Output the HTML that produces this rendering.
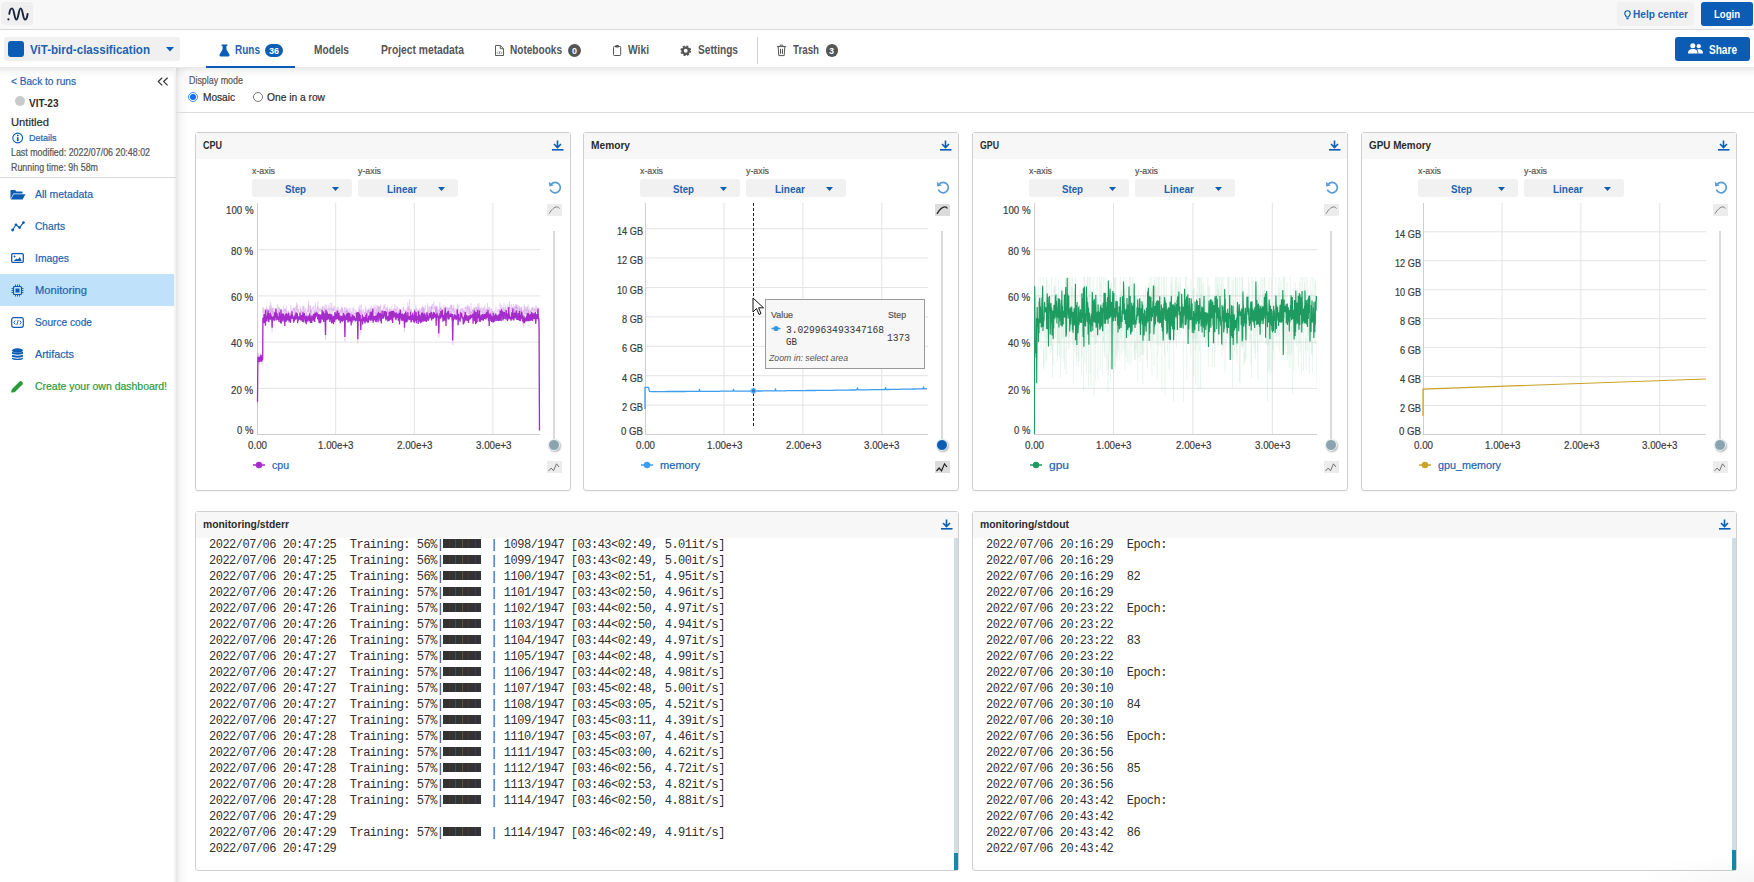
<!DOCTYPE html>
<html><head><meta charset="utf-8"><title>Monitoring</title>
<style>
html,body{margin:0;padding:0;width:1754px;height:882px;overflow:hidden;background:#fff;font-family:"Liberation Sans",sans-serif}
.t{position:absolute;white-space:pre;line-height:1;transform-origin:0 0}
.r{-webkit-text-stroke:0.2px currentColor}
svg{overflow:visible}
</style></head><body>
<div style="position:absolute;left:0px;top:0px;width:1754px;height:29px;background:#f8f8f8"></div>
<div style="position:absolute;left:0px;top:29px;width:1754px;height:1px;background:#d9d9d9"></div>
<div style="position:absolute;left:1px;top:2px;width:32px;height:23px;background:#efefef;border-radius:4px"></div>
<svg style="position:absolute;left:0px;top:0px;" width="34" height="28" viewBox="0 0 34 28"><circle cx="8.4" cy="19.3" r="1.1" fill="#172440"/><path d="M9.3 13.8 C9.8 9.8 10.8 8.4 12.1 8.4 C14.2 8.4 14.3 19.6 16.4 19.6 C18.5 19.6 18.6 8.4 20.7 8.4 C22.8 8.4 22.9 19.6 25 19.6 C26.4 19.6 27.2 17 27.6 14" fill="none" stroke="#172440" stroke-width="1.9" stroke-linecap="round"/></svg>
<div style="position:absolute;left:1617px;top:2px;width:77px;height:24px;background:#f1f1f1;border-radius:3px"></div>
<svg style="position:absolute;left:1623.5px;top:9.5px;" width="7" height="10" viewBox="0 0 7 10"><path d="M3.5 0.7 C1.8 0.7 0.8 2 0.8 3.4 C0.8 4.8 1.9 5.7 2.4 7 L4.6 7 C5.1 5.7 6.2 4.8 6.2 3.4 C6.2 2 5.2 0.7 3.5 0.7 Z" fill="none" stroke="#0b5cb5" stroke-width="1.1"/><rect x="2.3" y="7.9" width="2.4" height="1.3" rx="0.5" fill="#0b5cb5"/></svg>
<div class="t" style="left:1633px;top:8.5px;font-size:11.8px;color:#1c62b0;font-weight:700;transform:scaleX(0.8558);">Help center</div>
<div style="position:absolute;left:1701px;top:2px;width:52px;height:24px;background:#0b5cb5;border-radius:3px"></div>
<div class="t" style="left:1714px;top:8.5px;font-size:11.8px;color:#fff;font-weight:700;transform:scaleX(0.8097);">Login</div>
<div style="position:absolute;left:0px;top:30px;width:1754px;height:37px;background:#fff"></div>
<div style="position:absolute;left:0px;top:67px;width:1754px;height:11px;background:linear-gradient(rgba(0,0,0,0.085),rgba(0,0,0,0.03) 45%,rgba(0,0,0,0))"></div>
<div style="position:absolute;left:4px;top:37px;width:176px;height:24px;background:#f0f0f0;border-radius:3px"></div>
<div style="position:absolute;left:8px;top:41px;width:16px;height:16px;background:#0b5cb5;border-radius:3px"></div>
<div class="t" style="left:30px;top:43px;font-size:13px;color:#1c62b0;font-weight:700;transform:scaleX(0.8899);">ViT-bird-classification</div>
<svg style="position:absolute;left:166px;top:47px;" width="9" height="5" viewBox="0 0 9 5"><path d="M0 0 L8 0 L4 4.5 Z" fill="#0b5cb5"/></svg>
<svg style="position:absolute;left:219px;top:44px;" width="11" height="13" viewBox="0 0 11 13"><path d="M2.6 0.6 L8.4 0.6 L8.4 1.9 L7.4 1.9 L7.4 5.2 L10.4 10.6 C10.9 11.5 10.4 12.4 9.4 12.4 L1.6 12.4 C0.6 12.4 0.1 11.5 0.6 10.6 L3.6 5.2 L3.6 1.9 L2.6 1.9 Z" fill="#0b5cb5"/></svg>
<div class="t" style="left:235px;top:44px;font-size:12px;color:#1c62b0;font-weight:700;transform:scaleX(0.8333);">Runs</div>
<div style="position:absolute;left:265px;top:44px;width:18px;height:13px;background:#0b5cb5;border-radius:7px"></div>
<div class="t" style="left:268.5px;top:46.5px;font-size:9px;color:#fff;font-weight:700;transform:scaleX(0.9989);">36</div>
<div style="position:absolute;left:206px;top:66px;width:89px;height:2px;background:#0b5cb5"></div>
<div class="t" style="left:314px;top:44px;font-size:12px;color:#555;font-weight:700;transform:scaleX(0.8467);">Models</div>
<div class="t" style="left:381px;top:44px;font-size:12px;color:#555;font-weight:700;transform:scaleX(0.8583);">Project metadata</div>
<svg style="position:absolute;left:494px;top:44px;" width="11" height="13" viewBox="0 0 11 13"><path d="M1.5 1.5 L6.3 1.5 L9.5 4.7 L9.5 11.5 L1.5 11.5 Z M6.3 1.5 L6.3 4.7 L9.5 4.7" fill="none" stroke="#555" stroke-width="0.95" stroke-linejoin="round"/><path d="M4.1 7.6 L3.1 8.7 L4.1 9.8 M6.9 7.6 L7.9 8.7 L6.9 9.8 M5.9 7.3 L5.1 10.1" fill="none" stroke="#555" stroke-width="0.7"/></svg>
<div class="t" style="left:510px;top:44px;font-size:12px;color:#555;font-weight:700;transform:scaleX(0.8386);">Notebooks</div>
<div style="position:absolute;left:568px;top:44px;width:13px;height:13px;background:#555;border-radius:7px"></div>
<div class="t" style="left:572px;top:45.5px;font-size:9.5px;color:#fff;font-weight:700;transform:scaleX(0.9463);">0</div>
<svg style="position:absolute;left:612px;top:44px;" width="11" height="13" viewBox="0 0 11 13"><rect x="1.5" y="2.5" width="7.2" height="9" rx="0.8" fill="none" stroke="#555" stroke-width="1"/><rect x="3.4" y="1" width="3.4" height="2.4" rx="0.5" fill="#555"/></svg>
<div class="t" style="left:628px;top:44px;font-size:12px;color:#555;font-weight:700;transform:scaleX(0.8550);">Wiki</div>
<svg style="position:absolute;left:680px;top:45px;" width="12" height="12" viewBox="0 0 12 12"><circle cx="5.75" cy="5.75" r="4.2" fill="none" stroke="#555" stroke-width="2.3" stroke-dasharray="1.9 1.4"/><circle cx="5.75" cy="5.75" r="3.1" fill="none" stroke="#555" stroke-width="2.4"/></svg>
<div class="t" style="left:698px;top:44px;font-size:12px;color:#555;font-weight:700;transform:scaleX(0.8450);">Settings</div>
<div style="position:absolute;left:757px;top:37px;width:1px;height:27px;background:#d0d0d0"></div>
<svg style="position:absolute;left:776px;top:44px;" width="11" height="13" viewBox="0 0 11 13"><path d="M1 2.6 L10 2.6 M4 2.6 L4.3 1.1 L6.7 1.1 L7 2.6 M2.2 2.6 L2.8 11.6 L8.2 11.6 L8.8 2.6 M4.5 4.8 L4.5 9.8 M6.5 4.8 L6.5 9.8" fill="none" stroke="#555" stroke-width="1"/></svg>
<div class="t" style="left:793px;top:44px;font-size:12px;color:#555;font-weight:700;transform:scaleX(0.8121);">Trash</div>
<div style="position:absolute;left:825.5px;top:44px;width:12.5px;height:13px;background:#555;border-radius:7px"></div>
<div class="t" style="left:829px;top:45.5px;font-size:9.5px;color:#fff;font-weight:700;transform:scaleX(0.9463);">3</div>
<div style="position:absolute;left:1675px;top:37px;width:75px;height:24px;background:#0b5cb5;border-radius:3px"></div>
<svg style="position:absolute;left:1688px;top:43px;" width="15" height="11" viewBox="0 0 15 11"><circle cx="4.8" cy="2.8" r="2.5" fill="#fff"/><circle cx="10.8" cy="3.2" r="2.1" fill="#fff"/><path d="M0 10.5 C0 7 2 6 4.8 6 C7.6 6 9.6 7 9.6 10.5 Z" fill="#fff"/><path d="M10.3 10.5 C10.3 8.5 9.8 7.3 9 6.6 C9.5 6.3 10.2 6.2 10.8 6.2 C13.3 6.2 15 7.2 15 10.5 Z" fill="#fff"/></svg>
<div class="t" style="left:1709px;top:44px;font-size:12.5px;color:#fff;font-weight:700;transform:scaleX(0.8059);">Share</div>
<div style="position:absolute;left:174px;top:68px;width:2px;height:814px;background:#f3f3f3"></div>
<div style="position:absolute;left:176px;top:68px;width:12px;height:814px;background:linear-gradient(90deg,rgba(0,0,0,0.10),rgba(0,0,0,0.035) 35%,rgba(0,0,0,0))"></div>
<div class="t r" style="left:11px;top:76px;font-size:11px;color:#1c62b0;transform:scaleX(0.9204);">&lt; Back to runs</div>
<svg style="position:absolute;left:157px;top:77px;" width="12" height="10" viewBox="0 0 12 10"><path d="M5.2 0.8 L1.3 4.6 L5.2 8.4 M10.6 0.8 L6.7 4.6 L10.6 8.4" fill="none" stroke="#333" stroke-width="1.25"/></svg>
<div style="position:absolute;left:15px;top:96px;width:10px;height:10px;border-radius:5px;background:#c9c9c9"></div>
<div class="t" style="left:28.5px;top:98px;font-size:11.5px;color:#2b2b2b;font-weight:700;transform:scaleX(0.8708);">VIT-23</div>
<div class="t r" style="left:11px;top:117px;font-size:11px;color:#2b2b2b;transform:scaleX(1.0188);">Untitled</div>
<svg style="position:absolute;left:12px;top:132px;" width="12" height="12" viewBox="0 0 12 12"><circle cx="5.7" cy="6" r="4.9" fill="none" stroke="#0b5cb5" stroke-width="1.1"/><rect x="4.9" y="5.2" width="1.7" height="3.9" fill="#0b5cb5"/><rect x="4.9" y="2.7" width="1.7" height="1.5" fill="#0b5cb5"/></svg>
<div class="t r" style="left:28.5px;top:133px;font-size:9.6px;color:#1c62b0;transform:scaleX(0.9371);">Details</div>
<div class="t r" style="left:11px;top:148px;font-size:10px;color:#555;transform:scaleX(0.8865);">Last modified: 2022/07/06 20:48:02</div>
<div class="t r" style="left:11px;top:163px;font-size:10px;color:#555;transform:scaleX(0.8893);">Running time: 9h 58m</div>
<div style="position:absolute;left:0px;top:177px;width:176px;height:1px;background:#d9d9d9"></div>
<div style="position:absolute;left:0px;top:274px;width:174px;height:32px;background:#c0e1fa"></div>
<div class="t r" style="left:35px;top:189px;font-size:11px;color:#1c62b0;transform:scaleX(0.9485);">All metadata</div>
<div class="t r" style="left:35px;top:221px;font-size:11px;color:#1c62b0;transform:scaleX(0.9259);">Charts</div>
<div class="t r" style="left:35px;top:253px;font-size:11px;color:#1c62b0;transform:scaleX(0.9425);">Images</div>
<div class="t r" style="left:35px;top:285px;font-size:11px;color:#1c62b0;transform:scaleX(1.0125);">Monitoring</div>
<div class="t r" style="left:35px;top:317px;font-size:11px;color:#1c62b0;transform:scaleX(0.9229);">Source code</div>
<div class="t r" style="left:35px;top:349px;font-size:11px;color:#1c62b0;transform:scaleX(0.9816);">Artifacts</div>
<div class="t r" style="left:35px;top:381px;font-size:11px;color:#2a9a3a;transform:scaleX(0.9509);">Create your own dashboard!</div>
<svg style="position:absolute;left:10px;top:189px;" width="16" height="11" viewBox="0 0 16 11"><path d="M0.5 1 L5 1 L6.5 2.5 L12.5 2.5 L12.5 4.5 L3.5 4.5 L0.5 10 Z" fill="#0b5cb5"/><path d="M3.8 5.3 L15.5 5.3 L12.5 10.5 L0.8 10.5 Z" fill="#0b5cb5"/></svg>
<svg style="position:absolute;left:11px;top:221px;" width="14" height="11" viewBox="0 0 14 11"><path d="M1.6 9 L5 3.8 L8.6 6.6 L12.4 1.6" fill="none" stroke="#0b5cb5" stroke-width="1.1"/><circle cx="1.6" cy="9" r="1.4" fill="#0b5cb5"/><circle cx="5" cy="3.8" r="1.4" fill="#0b5cb5"/><circle cx="8.6" cy="6.6" r="1.4" fill="#0b5cb5"/><circle cx="12.4" cy="1.6" r="1.4" fill="#0b5cb5"/></svg>
<svg style="position:absolute;left:11px;top:253px;" width="13" height="10" viewBox="0 0 13 10"><rect x="0.7" y="0.7" width="11.6" height="8.6" rx="1" fill="none" stroke="#0b5cb5" stroke-width="1.3"/><circle cx="3.5" cy="3.5" r="1" fill="#0b5cb5"/><path d="M2.5 8 L5.5 5.5 L7 6.5 L8.7 4 L10.7 8 Z" fill="#0b5cb5"/></svg>
<svg style="position:absolute;left:11px;top:284px;" width="14" height="13" viewBox="0 0 14 13"><rect x="2.5" y="2.5" width="8" height="8" rx="1" fill="none" stroke="#0b5cb5" stroke-width="1.2"/><rect x="4.5" y="4.5" width="4" height="4" fill="#0b5cb5"/><path d="M4.5 0.5 V2.5 M6.5 0.5 V2.5 M8.5 0.5 V2.5 M4.5 10.5 V12.5 M6.5 10.5 V12.5 M8.5 10.5 V12.5 M0.5 4.5 H2.5 M0.5 6.5 H2.5 M0.5 8.5 H2.5 M10.5 4.5 H12.5 M10.5 6.5 H12.5 M10.5 8.5 H12.5" stroke="#0b5cb5" stroke-width="0.9"/></svg>
<svg style="position:absolute;left:11px;top:317px;" width="13" height="11" viewBox="0 0 13 11"><rect x="0.7" y="0.7" width="11.6" height="9.6" rx="2" fill="none" stroke="#0b5cb5" stroke-width="1.2"/><path d="M4.2 3.5 L2.8 5.5 L4.2 7.5 M8.8 3.5 L10.2 5.5 L8.8 7.5 M7.2 3 L5.8 8" fill="none" stroke="#0b5cb5" stroke-width="0.9"/></svg>
<svg style="position:absolute;left:11px;top:348px;" width="13" height="13" viewBox="0 0 13 13"><ellipse cx="6.5" cy="2.5" rx="5.5" ry="2.2" fill="#0b5cb5"/><path d="M1 3.5 L1 5.5 C1 7 12 7 12 5.5 L12 3.5 C12 5 1 5 1 3.5 Z" fill="#0b5cb5"/><path d="M1 6.5 L1 8.5 C1 10 12 10 12 8.5 L12 6.5 C12 8 1 8 1 6.5 Z" fill="#0b5cb5"/><path d="M1 9.5 L1 10.5 C1 12.5 12 12.5 12 10.5 L12 9.5 C12 11 1 11 1 9.5 Z" fill="#0b5cb5"/></svg>
<svg style="position:absolute;left:10px;top:380px;" width="14" height="13" viewBox="0 0 14 13"><path d="M1 12.5 L1.8 9.3 L9.6 1.5 C10.2 0.9 11 0.9 11.6 1.5 L12.5 2.4 C13.1 3 13.1 3.8 12.5 4.4 L4.7 12.2 Z" fill="#2a9a3a"/></svg>
<div class="t r" style="left:189px;top:76px;font-size:10px;color:#555;transform:scaleX(0.8913);">Display mode</div>
<div style="position:absolute;left:188px;top:92px;width:8px;height:8px;border-radius:50%;border:1.2px solid #3d8bf7;background:#fff"></div>
<div style="position:absolute;left:190.2px;top:94.2px;width:6px;height:6px;border-radius:50%;background:#0b6ef7"></div>
<div class="t r" style="left:203px;top:92px;font-size:11px;color:#2b2b2b;transform:scaleX(0.9184);">Mosaic</div>
<div style="position:absolute;left:253px;top:92px;width:8px;height:8px;border-radius:50%;border:1px solid #777;background:#fff"></div>
<div class="t r" style="left:267px;top:92px;font-size:11px;color:#2b2b2b;transform:scaleX(0.9300);">One in a row</div>
<div style="position:absolute;left:176px;top:112px;width:1578px;height:1px;background:#dcdcdc"></div>
<div style="position:absolute;left:195px;top:132px;width:376px;height:359px;border:1px solid #cfcfcf;border-radius:3px;box-sizing:border-box;background:#fff;box-shadow:0 1px 1px rgba(0,0,0,0.04)"></div>
<div style="position:absolute;left:196px;top:133px;width:374px;height:26px;background:#f7f7f7"></div>
<div class="t" style="left:203px;top:140px;font-size:11px;color:#2b2b2b;font-weight:700;transform:scaleX(0.8181);">CPU</div>
<svg style="position:absolute;left:552px;top:140px;" width="12" height="11" viewBox="0 0 12 11"><path d="M5.5 0.5 L5.5 7 M2 4 L5.5 7.5 L9 4" fill="none" stroke="#0b5cb5" stroke-width="1.6"/><rect x="0" y="9" width="11.5" height="1.6" fill="#0b5cb5"/></svg>
<div class="t r" style="left:252px;top:166px;font-size:9.5px;color:#555;transform:scaleX(0.9271);">x-axis</div>
<div class="t r" style="left:358px;top:166px;font-size:9.5px;color:#555;transform:scaleX(0.9271);">y-axis</div>
<div style="position:absolute;left:252px;top:179px;width:100px;height:18px;background:#f1f1f1;border-radius:3px"></div>
<div style="position:absolute;left:358px;top:179px;width:100px;height:18px;background:#f1f1f1;border-radius:3px"></div>
<div class="t" style="left:285px;top:183px;font-size:11.7px;color:#1c62b0;font-weight:700;transform:scaleX(0.8282);">Step</div>
<div class="t" style="left:387px;top:183px;font-size:11.7px;color:#1c62b0;font-weight:700;transform:scaleX(0.8544);">Linear</div>
<svg style="position:absolute;left:332px;top:187px;" width="8" height="5" viewBox="0 0 8 5"><path d="M0 0 L7 0 L3.5 4 Z" fill="#0b5cb5"/></svg>
<svg style="position:absolute;left:438px;top:187px;" width="8" height="5" viewBox="0 0 8 5"><path d="M0 0 L7 0 L3.5 4 Z" fill="#0b5cb5"/></svg>
<svg style="position:absolute;left:548px;top:180px;" width="14" height="15" viewBox="0 0 14 15"><path d="M3.2 4.2 A5.2 5.2 0 1 1 2.3 9.5" fill="none" stroke="#5b9bd5" stroke-width="1.7"/><path d="M0.8 1.8 L1.3 6.5 L5.8 5.6 Z" fill="#5b9bd5"/></svg>
<div style="position:absolute;left:547px;top:204px;width:15px;height:12px;background:#ececec"></div>
<svg style="position:absolute;left:547px;top:204px;" width="15" height="12" viewBox="0 0 15 12"><path d="M2 9.8 C4.5 5.5 7.2 2.9 10 2.9 C11.2 2.9 11.9 3.5 12.4 4.6" fill="none" stroke="#777" stroke-width="0.9"/></svg>
<div style="position:absolute;left:553px;top:231px;width:2px;height:214px;background:#dadada"></div>
<div style="position:absolute;left:548px;top:439px;width:12px;height:12px;border-radius:50%;background:#8aa3ae;border:0.8px solid #e8f4f8;box-sizing:border-box;box-shadow:1px 1px 2px rgba(0,0,0,0.3)"></div>
<div style="position:absolute;left:547px;top:461px;width:15px;height:12px;background:#ececec"></div>
<svg style="position:absolute;left:547px;top:461px;" width="15" height="12" viewBox="0 0 15 12"><path d="M1.5 10 L4.2 7 L6.5 9.8 L9.5 2.8 L12 6" fill="none" stroke="#666" stroke-width="0.9"/></svg>
<div class="t r" style="left:226.0px;top:205px;font-size:11px;color:#3a3a3a;transform:scaleX(0.8817);">100 %</div>
<div class="t r" style="left:231.3px;top:246px;font-size:11px;color:#3a3a3a;transform:scaleX(0.8854);">80 %</div>
<div class="t r" style="left:231.3px;top:292.2px;font-size:11px;color:#3a3a3a;transform:scaleX(0.8854);">60 %</div>
<div class="t r" style="left:231.3px;top:338.4px;font-size:11px;color:#3a3a3a;transform:scaleX(0.8854);">40 %</div>
<div class="t r" style="left:231.3px;top:384.6px;font-size:11px;color:#3a3a3a;transform:scaleX(0.8854);">20 %</div>
<div class="t r" style="left:237.2px;top:425px;font-size:11px;color:#3a3a3a;transform:scaleX(0.8600);">0 %</div>
<div class="t r" style="left:248.0px;top:440px;font-size:11px;color:#3a3a3a;transform:scaleX(0.8875);">0.00</div>
<div class="t r" style="left:318.35px;top:440px;font-size:11px;color:#3a3a3a;transform:scaleX(0.8860);">1.00e+3</div>
<div class="t r" style="left:396.95px;top:440px;font-size:11px;color:#3a3a3a;transform:scaleX(0.8860);">2.00e+3</div>
<div class="t r" style="left:475.54999999999995px;top:440px;font-size:11px;color:#3a3a3a;transform:scaleX(0.8860);">3.00e+3</div>
<svg style="position:absolute;left:252px;top:460px;" width="14" height="10" viewBox="0 0 14 10"><path d="M1 5 L13 5" stroke="#a62bcb" stroke-width="1.5"/><circle cx="7" cy="5" r="3.2" fill="#a62bcb"/></svg>
<div class="t r" style="left:272px;top:460px;font-size:11px;color:#1c62b0;transform:scaleX(0.9585);">cpu</div>
<svg style="position:absolute;left:195px;top:132px" width="376" height="359" viewBox="0 0 376 359"><rect x="140.2" y="71" width="1" height="231" fill="#e3e3e3"/><rect x="218.8" y="71" width="1" height="231" fill="#e3e3e3"/><rect x="297.4" y="71" width="1" height="231" fill="#e3e3e3"/><rect x="62" y="255.8" width="283" height="1" fill="#e3e3e3"/><rect x="62" y="209.6" width="283" height="1" fill="#e3e3e3"/><rect x="62" y="163.4" width="283" height="1" fill="#e3e3e3"/><rect x="62" y="117.2" width="283" height="1" fill="#e3e3e3"/><rect x="62" y="71" width="1" height="232" fill="#cfcfcf"/><rect x="62" y="302" width="283" height="1" fill="#cfcfcf"/><path d="M62.5 274.3 L62.7 232.7 L62.9 221.1 L63.1 224.8 L63.3 224.2 L63.5 221.4 L63.7 225.8 L63.9 227.7 L64.1 226.8 L64.3 232.9 L64.5 224.9 L64.7 227.5 L64.9 222.6 L65.1 229.5 L65.3 226.8 L65.5 229.3 L65.7 229.7 L65.9 221.5 L66.1 226.9 L66.3 222.7 L66.5 229.9 L66.7 224.3 L66.9 232.6 L67.1 227.0 L67.3 227.1 L67.5 222.1 L67.7 224.0 L67.9 175.2 L68.1 180.4 L68.3 181.3 L68.5 175.8 L68.7 177.3 L68.9 181.4 L69.1 179.3 L69.3 184.6 L69.5 183.1 L69.7 188.8 L69.9 176.5 L70.1 187.2 L70.3 177.7 L70.5 182.9 L70.7 183.1 L70.9 180.4 L71.1 178.6 L71.3 177.6 L71.5 173.7 L71.7 178.6 L71.9 176.3 L72.1 181.2 L72.3 176.8 L72.5 178.9 L72.7 180.7 L72.9 179.7 L73.1 179.5 L73.3 178.5 L73.5 177.7 L73.7 180.7 L73.9 181.5 L74.1 176.6 L74.3 185.0 L74.5 181.0 L74.7 173.6 L74.9 188.4 L75.1 181.2 L75.3 176.4 L75.5 184.7 L75.7 170.0 L75.9 188.1 L76.1 174.2 L76.3 173.5 L76.5 175.9 L76.7 180.0 L76.9 177.7 L77.1 200.4 L77.3 176.1 L77.5 182.8 L77.7 179.9 L77.9 175.6 L78.1 183.0 L78.3 180.9 L78.5 179.2 L78.7 184.5 L78.9 175.9 L79.1 178.7 L79.3 184.7 L79.5 179.6 L79.7 182.2 L79.9 181.9 L80.1 179.5 L80.2 182.0 L80.4 176.1 L80.6 181.9 L80.8 175.7 L81.0 179.3 L81.2 176.2 L81.4 181.2 L81.6 181.4 L81.8 183.5 L82.0 177.6 L82.2 176.2 L82.4 172.3 L82.6 175.1 L82.8 178.7 L83.0 180.4 L83.2 178.6 L83.4 180.1 L83.6 174.8 L83.8 176.9 L84.0 182.9 L84.2 182.8 L84.4 175.6 L84.6 179.4 L84.8 181.3 L85.0 176.3 L85.2 182.1 L85.4 181.6 L85.6 182.1 L85.8 187.1 L86.0 177.4 L86.2 184.3 L86.4 182.0 L86.6 182.4 L86.8 177.2 L87.0 180.0 L87.2 180.2 L87.4 186.0 L87.6 180.6 L87.8 185.2 L88.0 179.2 L88.2 178.8 L88.4 180.1 L88.6 173.1 L88.8 178.5 L89.0 178.2 L89.2 179.8 L89.4 181.0 L89.6 176.9 L89.8 176.6 L90.0 185.0 L90.2 176.7 L90.4 178.7 L90.6 177.3 L90.8 178.9 L91.0 184.6 L91.2 184.3 L91.4 173.8 L91.6 179.3 L91.8 185.1 L92.0 179.0 L92.2 181.2 L92.4 186.4 L92.6 188.0 L92.8 185.6 L93.0 179.2 L93.2 180.1 L93.4 181.2 L93.6 179.7 L93.8 178.4 L94.0 187.8 L94.2 181.5 L94.4 183.2 L94.6 184.8 L94.8 182.4 L95.0 180.9 L95.2 181.3 L95.4 185.3 L95.6 181.8 L95.8 173.1 L96.0 183.7 L96.2 185.9 L96.4 179.2 L96.6 178.2 L96.8 178.5 L97.0 183.7 L97.2 176.4 L97.4 182.5 L97.6 183.5 L97.8 181.4 L98.0 179.4 L98.2 176.9 L98.4 176.9 L98.6 179.1 L98.8 175.7 L99.0 178.8 L99.2 175.7 L99.4 183.3 L99.6 183.6 L99.8 175.4 L100.0 183.2 L100.2 179.3 L100.4 178.8 L100.6 180.0 L100.8 179.9 L101.0 173.6 L101.2 187.5 L101.4 175.5 L101.6 170.4 L101.8 178.5 L102.0 178.6 L102.2 176.2 L102.4 172.5 L102.6 183.0 L102.8 178.6 L103.0 179.9 L103.2 177.2 L103.4 178.6 L103.6 176.8 L103.8 180.8 L104.0 179.4 L104.2 182.1 L104.4 182.1 L104.6 180.1 L104.8 180.3 L105.0 184.0 L105.2 174.4 L105.4 180.1 L105.6 184.7 L105.8 176.1 L106.0 182.7 L106.2 178.3 L106.4 180.5 L106.6 179.5 L106.8 179.8 L107.0 182.4 L107.2 180.4 L107.4 173.8 L107.6 188.7 L107.8 180.5 L108.0 179.3 L108.2 184.7 L108.4 185.9 L108.6 174.2 L108.8 183.1 L109.0 174.2 L109.2 179.2 L109.4 181.0 L109.6 179.8 L109.8 179.1 L110.0 177.1 L110.2 179.6 L110.4 180.4 L110.6 180.3 L110.8 175.9 L111.0 177.5 L111.2 183.8 L111.4 182.7 L111.6 179.3 L111.8 182.6 L112.0 181.5 L112.2 183.5 L112.4 181.0 L112.6 178.7 L112.8 176.8 L113.0 180.0 L113.2 172.7 L113.4 180.5 L113.6 168.8 L113.8 176.5 L114.0 178.6 L114.2 182.0 L114.4 189.9 L114.6 180.5 L114.8 179.7 L115.0 173.6 L115.2 185.1 L115.4 173.5 L115.5 181.1 L115.7 177.7 L115.9 188.5 L116.1 179.2 L116.3 180.6 L116.5 176.9 L116.7 178.6 L116.9 183.0 L117.1 175.6 L117.3 176.2 L117.5 176.4 L117.7 175.1 L117.9 174.8 L118.1 178.8 L118.3 183.4 L118.5 183.2 L118.7 173.8 L118.9 176.1 L119.1 178.3 L119.3 180.1 L119.5 178.4 L119.7 178.2 L119.9 179.6 L120.1 180.7 L120.3 171.0 L120.5 177.7 L120.7 180.2 L120.9 183.0 L121.1 181.2 L121.3 176.2 L121.5 176.1 L121.7 179.8 L121.9 178.5 L122.1 179.9 L122.3 182.6 L122.5 174.3 L122.7 177.3 L122.9 169.8 L123.1 181.0 L123.3 179.1 L123.5 175.6 L123.7 179.5 L123.9 183.8 L124.1 182.1 L124.3 178.2 L124.5 177.1 L124.7 178.9 L124.9 175.4 L125.1 175.5 L125.3 178.1 L125.5 179.3 L125.7 180.1 L125.9 177.4 L126.1 175.9 L126.3 178.7 L126.5 177.5 L126.7 180.2 L126.9 183.7 L127.1 182.2 L127.3 176.1 L127.5 177.6 L127.7 173.7 L127.9 178.8 L128.1 175.9 L128.3 174.2 L128.5 175.5 L128.7 181.2 L128.9 179.7 L129.1 178.6 L129.3 182.4 L129.5 177.3 L129.7 175.2 L129.9 180.4 L130.1 171.7 L130.3 179.7 L130.5 207.8 L130.7 179.2 L130.9 180.9 L131.1 177.0 L131.3 178.5 L131.5 172.8 L131.7 176.7 L131.9 177.0 L132.1 179.6 L132.3 183.9 L132.5 179.3 L132.7 182.2 L132.9 175.8 L133.1 179.4 L133.3 173.2 L133.5 176.0 L133.7 175.8 L133.9 177.9 L134.1 178.3 L134.3 176.9 L134.5 176.1 L134.7 182.0 L134.9 178.1 L135.1 170.8 L135.3 180.0 L135.5 180.2 L135.7 181.6 L135.9 184.5 L136.1 175.4 L136.3 179.2 L136.5 178.3 L136.7 172.9 L136.9 170.8 L137.1 182.8 L137.3 176.0 L137.5 177.5 L137.7 178.2 L137.9 177.8 L138.1 179.8 L138.3 174.4 L138.5 177.8 L138.7 178.9 L138.9 175.9 L139.1 177.0 L139.3 178.2 L139.5 178.9 L139.7 173.8 L139.9 177.8 L140.1 180.0 L140.3 183.0 L140.5 181.0 L140.7 183.1 L140.9 178.9 L141.1 178.3 L141.3 186.4 L141.5 179.8 L141.7 177.2 L141.9 178.8 L142.1 182.3 L142.3 174.7 L142.5 181.5 L142.7 183.4 L142.9 182.9 L143.1 178.9 L143.3 175.8 L143.5 175.2 L143.7 178.6 L143.9 183.5 L144.1 181.8 L144.3 182.7 L144.5 180.2 L144.7 185.7 L144.9 179.1 L145.1 177.1 L145.3 180.1 L145.5 178.2 L145.7 183.1 L145.9 184.9 L146.1 182.0 L146.3 175.7 L146.5 176.2 L146.7 181.6 L146.9 175.7 L147.1 181.2 L147.3 174.6 L147.5 178.1 L147.7 181.2 L147.9 177.0 L148.1 182.6 L148.3 182.8 L148.5 184.8 L148.7 178.9 L148.9 180.2 L149.1 180.4 L149.3 181.5 L149.5 174.9 L149.7 181.6 L149.9 209.6 L150.1 176.2 L150.3 175.7 L150.5 179.4 L150.6 186.5 L150.8 182.8 L151.0 178.7 L151.2 180.4 L151.4 175.5 L151.6 185.8 L151.8 178.7 L152.0 183.3 L152.2 176.4 L152.4 181.4 L152.6 177.6 L152.8 183.2 L153.0 185.9 L153.2 184.6 L153.4 182.8 L153.6 184.5 L153.8 177.1 L154.0 176.2 L154.2 179.9 L154.4 184.3 L154.6 181.0 L154.8 183.1 L155.0 175.6 L155.2 179.4 L155.4 178.9 L155.6 182.2 L155.8 187.9 L156.0 183.7 L156.2 184.9 L156.4 179.6 L156.6 180.8 L156.8 184.1 L157.0 182.6 L157.2 175.6 L157.4 184.7 L157.6 184.7 L157.8 182.3 L158.0 183.8 L158.2 182.7 L158.4 179.5 L158.6 175.4 L158.8 187.5 L159.0 181.2 L159.2 181.0 L159.4 181.3 L159.6 181.6 L159.8 182.3 L160.0 177.5 L160.2 182.7 L160.4 181.4 L160.6 180.9 L160.8 180.8 L161.0 181.6 L161.2 177.6 L161.4 180.8 L161.6 179.7 L161.8 180.3 L162.0 183.9 L162.2 183.3 L162.4 184.2 L162.6 180.0 L162.8 211.9 L163.0 184.5 L163.2 180.2 L163.4 179.1 L163.6 186.7 L163.8 174.7 L164.0 180.3 L164.2 181.0 L164.4 177.1 L164.6 180.5 L164.8 182.6 L165.0 172.9 L165.2 184.6 L165.4 180.8 L165.6 177.8 L165.8 202.7 L166.0 181.2 L166.2 179.7 L166.4 172.6 L166.6 183.8 L166.8 180.8 L167.0 178.6 L167.2 180.7 L167.4 185.3 L167.6 179.6 L167.8 180.5 L168.0 179.2 L168.2 177.0 L168.4 177.4 L168.6 179.4 L168.8 179.6 L169.0 184.6 L169.2 181.1 L169.4 180.3 L169.6 182.7 L169.8 180.9 L170.0 184.0 L170.2 175.7 L170.4 173.6 L170.6 182.3 L170.8 179.5 L171.0 181.5 L171.2 176.3 L171.4 179.4 L171.6 180.6 L171.8 181.5 L172.0 180.0 L172.2 183.7 L172.4 178.1 L172.6 182.7 L172.8 178.4 L173.0 180.2 L173.2 176.6 L173.4 180.7 L173.6 177.1 L173.8 183.8 L174.0 178.3 L174.2 180.9 L174.4 179.5 L174.6 179.6 L174.8 176.4 L175.0 186.6 L175.2 178.5 L175.4 184.8 L175.6 175.5 L175.8 186.4 L176.0 183.0 L176.2 185.1 L176.4 173.5 L176.6 183.8 L176.8 178.9 L177.0 181.0 L177.2 185.4 L177.4 179.9 L177.6 176.5 L177.8 179.5 L178.0 175.6 L178.2 180.3 L178.4 179.1 L178.6 180.4 L178.8 178.0 L179.0 172.6 L179.2 178.2 L179.4 178.6 L179.6 181.6 L179.8 182.3 L180.0 175.1 L180.2 184.1 L180.4 183.1 L180.6 180.3 L180.8 181.5 L181.0 172.9 L181.2 187.9 L181.4 178.6 L181.6 177.2 L181.8 183.4 L182.0 181.8 L182.2 177.8 L182.4 173.5 L182.6 182.6 L182.8 185.0 L183.0 176.1 L183.2 174.2 L183.4 180.5 L183.6 186.7 L183.8 173.8 L184.0 179.6 L184.2 175.0 L184.4 179.2 L184.6 180.1 L184.8 180.3 L185.0 173.5 L185.2 173.9 L185.4 186.5 L185.6 182.4 L185.8 172.8 L185.9 180.1 L186.1 183.7 L186.3 178.8 L186.5 179.3 L186.7 179.3 L186.9 180.9 L187.1 179.9 L187.3 180.3 L187.5 177.4 L187.7 181.3 L187.9 179.0 L188.1 178.5 L188.3 173.5 L188.5 176.9 L188.7 178.6 L188.9 176.3 L189.1 177.0 L189.3 174.1 L189.5 176.1 L189.7 171.8 L189.9 173.5 L190.1 178.6 L190.3 179.9 L190.5 175.5 L190.7 176.9 L190.9 179.0 L191.1 183.4 L191.3 184.3 L191.5 176.9 L191.7 175.6 L191.9 175.3 L192.1 182.5 L192.3 174.7 L192.5 180.3 L192.7 177.0 L192.9 177.3 L193.1 181.6 L193.3 181.0 L193.5 186.0 L193.7 182.2 L193.9 185.5 L194.1 177.5 L194.3 178.6 L194.5 175.7 L194.7 177.5 L194.9 180.8 L195.1 177.6 L195.3 180.4 L195.5 176.8 L195.7 177.8 L195.9 182.6 L196.1 179.1 L196.3 179.1 L196.5 180.2 L196.7 176.1 L196.9 173.5 L197.1 180.6 L197.3 180.3 L197.5 186.8 L197.7 179.3 L197.9 180.3 L198.1 185.9 L198.3 177.6 L198.5 176.5 L198.7 180.9 L198.9 179.7 L199.1 182.0 L199.3 176.4 L199.5 184.0 L199.7 179.6 L199.9 171.9 L200.1 178.4 L200.3 177.1 L200.5 179.1 L200.7 182.8 L200.9 178.6 L201.1 176.8 L201.3 181.6 L201.5 177.2 L201.7 173.9 L201.9 174.6 L202.1 183.9 L202.3 181.9 L202.5 184.1 L202.7 175.2 L202.9 176.5 L203.1 176.1 L203.3 181.3 L203.5 182.2 L203.7 177.9 L203.9 177.9 L204.1 181.3 L204.3 178.0 L204.5 176.4 L204.7 177.6 L204.9 182.2 L205.1 185.8 L205.3 179.9 L205.5 178.6 L205.7 180.0 L205.9 180.8 L206.1 182.0 L206.3 177.2 L206.5 179.9 L206.7 179.7 L206.9 183.5 L207.1 182.2 L207.3 179.1 L207.5 183.2 L207.7 184.2 L207.9 181.2 L208.1 175.8 L208.3 179.0 L208.5 174.7 L208.7 180.2 L208.9 180.9 L209.1 184.8 L209.3 181.9 L209.5 200.4 L209.7 178.8 L209.9 177.0 L210.1 177.1 L210.3 179.5 L210.5 180.0 L210.7 178.5 L210.9 176.9 L211.1 177.7 L211.3 177.6 L211.5 179.0 L211.7 182.2 L211.9 180.0 L212.1 182.3 L212.3 175.4 L212.5 186.1 L212.7 179.4 L212.9 170.4 L213.1 180.0 L213.3 182.6 L213.5 178.7 L213.7 174.0 L213.9 178.8 L214.1 176.3 L214.3 177.9 L214.5 179.5 L214.7 167.2 L214.9 177.7 L215.1 180.3 L215.3 180.7 L215.5 177.9 L215.7 178.1 L215.9 176.9 L216.1 179.2 L216.3 184.6 L216.5 177.6 L216.7 180.5 L216.9 180.6 L217.1 184.8 L217.3 181.8 L217.5 182.3 L217.7 179.8 L217.9 185.1 L218.1 180.2 L218.3 179.8 L218.5 184.2 L218.7 182.6 L218.9 183.2 L219.1 177.0 L219.3 189.0 L219.5 181.3 L219.7 185.8 L219.9 181.7 L220.1 177.1 L220.3 182.5 L220.5 179.7 L220.7 183.4 L220.9 173.4 L221.1 177.1 L221.2 176.0 L221.4 184.6 L221.6 184.1 L221.8 177.0 L222.0 181.2 L222.2 181.6 L222.4 179.6 L222.6 185.0 L222.8 178.1 L223.0 180.5 L223.2 178.7 L223.4 182.7 L223.6 178.2 L223.8 182.0 L224.0 176.4 L224.2 175.9 L224.4 177.0 L224.6 178.3 L224.8 177.8 L225.0 189.3 L225.2 176.9 L225.4 180.7 L225.6 179.7 L225.8 180.9 L226.0 184.8 L226.2 182.2 L226.4 178.1 L226.6 175.5 L226.8 182.6 L227.0 183.9 L227.2 175.8 L227.4 183.9 L227.6 173.7 L227.8 180.8 L228.0 184.2 L228.2 177.4 L228.4 175.0 L228.6 186.0 L228.8 175.8 L229.0 181.7 L229.2 175.8 L229.4 182.1 L229.6 186.2 L229.8 178.6 L230.0 177.2 L230.2 173.1 L230.4 173.9 L230.6 177.4 L230.8 180.6 L231.0 181.7 L231.2 180.8 L231.4 182.4 L231.6 180.7 L231.8 189.2 L232.0 179.7 L232.2 180.3 L232.4 171.2 L232.6 177.4 L232.8 181.5 L233.0 177.6 L233.2 184.0 L233.4 181.6 L233.6 185.5 L233.8 173.9 L234.0 176.5 L234.2 182.4 L234.4 178.2 L234.6 174.8 L234.8 176.4 L235.0 176.5 L235.2 180.6 L235.4 180.0 L235.6 177.5 L235.8 174.7 L236.0 180.6 L236.2 181.7 L236.4 174.0 L236.6 181.0 L236.8 173.8 L237.0 177.0 L237.2 174.9 L237.4 172.0 L237.6 175.7 L237.8 175.5 L238.0 181.4 L238.2 180.5 L238.4 175.9 L238.6 172.6 L238.8 173.0 L239.0 169.7 L239.2 176.7 L239.4 177.2 L239.6 174.2 L239.8 177.5 L240.0 177.6 L240.2 181.0 L240.4 173.8 L240.6 181.1 L240.8 175.7 L241.0 182.5 L241.2 173.5 L241.4 181.0 L241.6 174.8 L241.8 183.4 L242.0 179.7 L242.2 174.0 L242.4 181.1 L242.6 177.9 L242.8 179.7 L243.0 186.0 L243.2 177.1 L243.4 176.7 L243.6 182.1 L243.8 206.1 L244.0 181.0 L244.2 181.6 L244.4 178.0 L244.6 180.5 L244.8 170.2 L245.0 183.4 L245.2 175.6 L245.4 174.9 L245.6 184.9 L245.8 183.9 L246.0 175.8 L246.2 179.6 L246.4 176.8 L246.6 174.6 L246.8 179.7 L247.0 182.2 L247.2 188.1 L247.4 178.0 L247.6 182.1 L247.8 177.6 L248.0 178.2 L248.2 183.8 L248.4 173.1 L248.6 175.3 L248.8 175.9 L249.0 182.8 L249.2 180.1 L249.4 180.3 L249.6 180.0 L249.8 182.3 L250.0 176.6 L250.2 177.2 L250.4 176.6 L250.6 179.9 L250.8 173.8 L251.0 177.7 L251.2 187.7 L251.4 180.2 L251.6 178.1 L251.8 174.7 L252.0 178.8 L252.2 178.8 L252.4 180.0 L252.6 175.6 L252.8 179.5 L253.0 180.2 L253.2 180.3 L253.4 175.8 L253.6 179.9 L253.8 183.9 L254.0 176.0 L254.2 180.8 L254.4 177.5 L254.6 177.3 L254.8 174.4 L255.0 174.8 L255.2 180.4 L255.4 178.8 L255.6 182.7 L255.8 172.4 L256.0 176.5 L256.2 173.0 L256.4 179.1 L256.5 185.2 L256.7 172.9 L256.9 178.1 L257.1 178.2 L257.3 178.6 L257.5 176.5 L257.7 213.1 L257.9 184.4 L258.1 175.3 L258.3 181.1 L258.5 180.7 L258.7 172.6 L258.9 175.5 L259.1 179.7 L259.3 184.9 L259.5 178.0 L259.7 176.8 L259.9 179.0 L260.1 183.0 L260.3 181.6 L260.5 182.9 L260.7 178.2 L260.9 176.0 L261.1 175.7 L261.3 181.7 L261.5 178.3 L261.7 177.4 L261.9 181.0 L262.1 179.6 L262.3 171.7 L262.5 178.6 L262.7 176.4 L262.9 181.4 L263.1 179.9 L263.3 185.9 L263.5 180.2 L263.7 175.9 L263.9 173.0 L264.1 176.3 L264.3 178.0 L264.5 180.2 L264.7 182.4 L264.9 180.6 L265.1 177.8 L265.3 182.7 L265.5 176.9 L265.7 183.5 L265.9 186.2 L266.1 183.4 L266.3 185.8 L266.5 184.4 L266.7 176.3 L266.9 181.0 L267.1 179.7 L267.3 176.7 L267.5 176.3 L267.7 182.4 L267.9 176.3 L268.1 179.6 L268.3 180.6 L268.5 178.8 L268.7 185.2 L268.9 183.1 L269.1 180.5 L269.3 177.9 L269.5 181.3 L269.7 180.5 L269.9 176.5 L270.1 174.9 L270.3 177.0 L270.5 175.1 L270.7 181.0 L270.9 180.5 L271.1 178.5 L271.3 180.8 L271.5 181.4 L271.7 173.9 L271.9 179.9 L272.1 182.4 L272.3 177.5 L272.5 172.7 L272.7 178.7 L272.9 175.1 L273.1 181.0 L273.3 181.2 L273.5 182.0 L273.7 180.0 L273.9 173.5 L274.1 184.1 L274.3 174.5 L274.5 183.9 L274.7 180.9 L274.9 177.1 L275.1 178.0 L275.3 179.0 L275.5 185.9 L275.7 178.9 L275.9 183.6 L276.1 171.1 L276.3 181.1 L276.5 180.0 L276.7 184.5 L276.9 182.0 L277.1 184.7 L277.3 177.1 L277.5 181.0 L277.7 177.7 L277.9 182.3 L278.1 181.8 L278.3 175.2 L278.5 182.7 L278.7 185.3 L278.9 177.6 L279.1 182.7 L279.3 180.4 L279.5 175.7 L279.7 181.7 L279.9 176.2 L280.1 181.8 L280.3 174.3 L280.5 175.0 L280.7 181.5 L280.9 180.5 L281.1 182.4 L281.3 178.7 L281.5 175.1 L281.7 184.3 L281.9 175.7 L282.1 183.4 L282.3 181.8 L282.5 184.8 L282.7 171.5 L282.9 178.5 L283.1 177.8 L283.3 181.3 L283.5 175.0 L283.7 186.1 L283.9 178.6 L284.1 171.1 L284.3 180.0 L284.5 178.6 L284.7 176.5 L284.9 181.9 L285.1 179.3 L285.3 176.0 L285.5 178.8 L285.7 178.4 L285.9 180.9 L286.1 178.7 L286.3 179.7 L286.5 175.0 L286.7 177.5 L286.9 180.7 L287.1 187.9 L287.3 176.7 L287.5 176.5 L287.7 182.3 L287.9 185.9 L288.1 183.0 L288.3 175.8 L288.5 182.7 L288.7 180.6 L288.9 178.2 L289.1 174.9 L289.3 178.9 L289.5 179.4 L289.7 181.0 L289.9 173.5 L290.1 175.4 L290.3 179.2 L290.5 183.9 L290.7 181.7 L290.9 177.4 L291.1 182.1 L291.3 176.3 L291.5 178.1 L291.6 178.4 L291.8 177.2 L292.0 177.6 L292.2 182.4 L292.4 180.5 L292.6 171.0 L292.8 183.4 L293.0 180.8 L293.2 175.2 L293.4 179.9 L293.6 182.3 L293.8 183.9 L294.0 177.4 L294.2 176.1 L294.4 174.8 L294.6 179.5 L294.8 176.2 L295.0 184.0 L295.2 180.1 L295.4 183.1 L295.6 180.3 L295.8 178.4 L296.0 177.1 L296.2 184.0 L296.4 176.2 L296.6 182.0 L296.8 183.7 L297.0 180.6 L297.2 185.2 L297.4 180.0 L297.6 179.0 L297.8 180.6 L298.0 178.3 L298.2 181.4 L298.4 180.3 L298.6 185.2 L298.8 180.1 L299.0 183.2 L299.2 181.9 L299.4 180.5 L299.6 179.2 L299.8 185.6 L300.0 185.3 L300.2 181.1 L300.4 178.3 L300.6 178.7 L300.8 176.5 L301.0 174.7 L301.2 177.7 L301.4 179.4 L301.6 183.0 L301.8 182.9 L302.0 181.4 L302.2 178.5 L302.4 178.6 L302.6 179.6 L302.8 180.0 L303.0 176.9 L303.2 178.4 L303.4 178.0 L303.6 178.0 L303.8 180.9 L304.0 182.6 L304.2 177.3 L304.4 177.3 L304.6 179.5 L304.8 180.1 L305.0 170.9 L305.2 181.8 L305.4 179.9 L305.6 178.2 L305.8 183.3 L306.0 178.5 L306.2 172.8 L306.4 175.8 L306.6 176.6 L306.8 176.4 L307.0 177.9 L307.2 174.9 L307.4 178.7 L307.6 179.7 L307.8 178.2 L308.0 175.5 L308.2 177.5 L308.4 176.5 L308.6 185.8 L308.8 174.5 L309.0 170.9 L309.2 174.5 L309.4 179.7 L309.6 181.5 L309.8 177.6 L310.0 181.7 L310.2 175.9 L310.4 180.4 L310.6 174.9 L310.8 173.7 L311.0 185.8 L311.2 177.6 L311.4 180.9 L311.6 183.4 L311.8 180.6 L312.0 179.3 L312.2 174.8 L312.4 183.9 L312.6 175.0 L312.8 171.8 L313.0 176.8 L313.2 176.7 L313.4 178.5 L313.6 182.4 L313.8 176.4 L314.0 177.1 L314.2 175.9 L314.4 169.3 L314.6 175.8 L314.8 176.8 L315.0 172.8 L315.2 182.9 L315.4 182.1 L315.6 179.5 L315.8 180.3 L316.0 175.7 L316.2 179.3 L316.4 171.8 L316.6 172.8 L316.8 175.4 L317.0 179.2 L317.2 175.3 L317.4 174.8 L317.6 181.2 L317.8 176.2 L318.0 175.0 L318.2 176.7 L318.4 172.0 L318.6 173.3 L318.8 180.1 L319.0 176.9 L319.2 180.2 L319.4 175.6 L319.6 180.5 L319.8 174.2 L320.0 176.1 L320.2 174.3 L320.4 178.3 L320.6 182.9 L320.8 171.8 L321.0 178.4 L321.2 173.1 L321.4 176.9 L321.6 176.4 L321.8 172.4 L322.0 177.2 L322.2 173.4 L322.4 183.5 L322.6 175.6 L322.8 179.4 L323.0 178.9 L323.2 178.5 L323.4 177.6 L323.6 173.3 L323.8 185.1 L324.0 178.0 L324.2 180.3 L324.4 173.9 L324.6 179.2 L324.8 176.4 L325.0 179.3 L325.2 176.0 L325.4 175.0 L325.6 179.8 L325.8 178.1 L326.0 183.2 L326.2 177.2 L326.4 175.3 L326.6 180.4 L326.8 174.8 L326.9 185.7 L327.1 185.2 L327.3 183.6 L327.5 180.6 L327.7 179.2 L327.9 179.7 L328.1 180.0 L328.3 177.1 L328.5 195.7 L328.7 183.7 L328.9 183.9 L329.1 172.4 L329.3 187.4 L329.5 179.7 L329.7 174.2 L329.9 177.5 L330.1 182.2 L330.3 179.5 L330.5 176.5 L330.7 175.4 L330.9 183.0 L331.1 177.4 L331.3 179.3 L331.5 176.0 L331.7 175.1 L331.9 181.6 L332.1 185.4 L332.3 179.1 L332.5 174.7 L332.7 178.4 L332.9 180.1 L333.1 172.4 L333.3 184.6 L333.5 178.0 L333.7 183.1 L333.9 180.8 L334.1 181.0 L334.3 175.6 L334.5 184.1 L334.7 182.6 L334.9 185.9 L335.1 178.4 L335.3 181.5 L335.5 178.5 L335.7 183.3 L335.9 180.8 L336.1 176.1 L336.3 179.9 L336.5 177.1 L336.7 177.4 L336.9 180.4 L337.1 184.3 L337.3 175.4 L337.5 177.9 L337.7 175.1 L337.9 185.9 L338.1 184.6 L338.3 186.4 L338.5 182.1 L338.7 175.5 L338.9 177.3 L339.1 179.2 L339.3 178.5 L339.5 176.2 L339.7 179.7 L339.9 177.2 L340.1 178.0 L340.3 186.3 L340.5 179.8 L340.7 173.6 L340.9 179.8 L341.1 178.8 L341.3 180.1 L341.5 179.6 L341.7 174.2 L341.9 179.2 L342.1 181.5 L342.3 189.1 L342.5 180.2 L342.7 185.1 L342.9 184.8 L343.1 175.9 L343.3 176.2 L343.5 185.2 L343.7 175.6 L343.9 176.9 L344.1 198.1 L344.3 255.8 L344.5 298.5" fill="none" stroke="#a62bcb" stroke-opacity="0.13" stroke-width="1"/><path d="M62.5 269.7 L62.7 244.2 L62.9 225.8 L63.1 224.9 L63.3 230.0 L63.5 229.6 L63.7 229.1 L63.9 226.5 L64.1 227.7 L64.3 224.9 L64.5 228.6 L64.7 229.9 L64.9 228.1 L65.1 226.8 L65.3 229.1 L65.5 226.3 L65.7 222.7 L65.9 228.3 L66.1 226.8 L66.3 223.8 L66.5 228.4 L66.7 228.9 L66.9 229.5 L67.1 226.0 L67.3 225.8 L67.5 227.3 L67.7 226.9 L67.9 186.6 L68.1 185.8 L68.3 191.2 L68.5 189.1 L68.7 189.4 L68.9 184.7 L69.1 182.0 L69.3 184.2 L69.5 187.7 L69.7 182.5 L69.9 190.9 L70.1 182.0 L70.3 187.8 L70.5 193.8 L70.7 177.8 L70.9 181.0 L71.1 188.3 L71.3 185.0 L71.5 186.3 L71.7 185.3 L71.9 189.4 L72.1 186.9 L72.3 183.7 L72.5 184.6 L72.7 181.4 L72.9 184.9 L73.1 178.3 L73.3 187.0 L73.5 184.2 L73.7 190.2 L73.9 188.4 L74.1 181.1 L74.3 187.6 L74.5 183.1 L74.7 184.9 L74.9 187.8 L75.1 185.5 L75.3 186.1 L75.5 186.2 L75.7 182.6 L75.9 183.0 L76.1 186.6 L76.3 187.3 L76.5 184.1 L76.7 185.3 L76.9 190.3 L77.1 195.7 L77.3 190.3 L77.5 184.8 L77.7 185.2 L77.9 187.3 L78.1 187.5 L78.3 188.3 L78.5 186.7 L78.7 186.9 L78.9 183.6 L79.1 186.8 L79.3 185.8 L79.5 188.8 L79.7 180.6 L79.9 183.9 L80.1 180.3 L80.2 183.0 L80.4 180.9 L80.6 186.0 L80.8 182.8 L81.0 177.1 L81.2 188.5 L81.4 181.7 L81.6 180.5 L81.8 184.1 L82.0 183.2 L82.2 181.5 L82.4 187.3 L82.6 184.1 L82.8 187.9 L83.0 187.4 L83.2 187.5 L83.4 186.2 L83.6 185.2 L83.8 184.6 L84.0 189.9 L84.2 180.3 L84.4 182.7 L84.6 184.1 L84.8 187.3 L85.0 186.4 L85.2 184.9 L85.4 185.1 L85.6 191.2 L85.8 183.9 L86.0 177.5 L86.2 191.4 L86.4 182.8 L86.6 184.5 L86.8 185.9 L87.0 181.5 L87.2 189.5 L87.4 185.5 L87.6 181.7 L87.8 186.5 L88.0 187.2 L88.2 185.5 L88.4 187.1 L88.6 181.4 L88.8 188.8 L89.0 183.5 L89.2 189.8 L89.4 184.1 L89.6 186.3 L89.8 193.9 L90.0 186.2 L90.2 189.3 L90.4 187.6 L90.6 181.8 L90.8 189.6 L91.0 189.2 L91.2 181.7 L91.4 185.5 L91.6 181.4 L91.8 185.0 L92.0 188.6 L92.2 185.9 L92.4 182.2 L92.6 183.0 L92.8 185.8 L93.0 185.8 L93.2 186.1 L93.4 187.8 L93.6 180.7 L93.8 186.2 L94.0 189.6 L94.2 187.6 L94.4 183.9 L94.6 184.4 L94.8 186.7 L95.0 188.2 L95.2 186.1 L95.4 191.0 L95.6 189.7 L95.8 183.5 L96.0 187.2 L96.2 184.7 L96.4 182.3 L96.6 184.1 L96.8 185.8 L97.0 179.3 L97.2 183.7 L97.4 186.6 L97.6 183.2 L97.8 183.8 L98.0 187.3 L98.2 184.9 L98.4 185.3 L98.6 190.7 L98.8 185.3 L99.0 185.7 L99.2 185.8 L99.4 189.1 L99.6 185.0 L99.8 184.0 L100.0 183.9 L100.2 187.4 L100.4 182.3 L100.6 187.7 L100.8 184.7 L101.0 180.3 L101.2 186.6 L101.4 185.8 L101.6 180.9 L101.8 185.5 L102.0 185.2 L102.2 183.8 L102.4 181.5 L102.6 191.2 L102.8 187.1 L103.0 188.0 L103.2 188.1 L103.4 187.4 L103.6 187.3 L103.8 184.2 L104.0 188.0 L104.2 185.2 L104.4 184.4 L104.6 187.5 L104.8 185.2 L105.0 180.8 L105.2 184.7 L105.4 187.3 L105.6 185.9 L105.8 188.4 L106.0 185.1 L106.2 183.2 L106.4 188.6 L106.6 186.7 L106.8 182.8 L107.0 187.7 L107.2 185.8 L107.4 189.7 L107.6 189.1 L107.8 188.0 L108.0 180.3 L108.2 188.0 L108.4 188.5 L108.6 189.0 L108.8 188.1 L109.0 185.3 L109.2 186.3 L109.4 181.1 L109.6 186.6 L109.8 182.8 L110.0 186.2 L110.2 185.1 L110.4 190.8 L110.6 187.0 L110.8 186.6 L111.0 186.8 L111.2 192.3 L111.4 183.7 L111.6 187.4 L111.8 187.5 L112.0 186.7 L112.2 186.6 L112.4 184.7 L112.6 189.6 L112.8 188.7 L113.0 184.9 L113.2 185.2 L113.4 187.1 L113.6 187.3 L113.8 188.1 L114.0 186.3 L114.2 182.7 L114.4 188.9 L114.6 181.4 L114.8 183.6 L115.0 187.4 L115.2 183.8 L115.4 190.1 L115.5 191.0 L115.7 189.7 L115.9 186.7 L116.1 186.4 L116.3 186.7 L116.5 184.7 L116.7 190.9 L116.9 183.3 L117.1 188.7 L117.3 186.3 L117.5 185.4 L117.7 187.7 L117.9 188.4 L118.1 187.4 L118.3 184.5 L118.5 182.5 L118.7 182.6 L118.9 187.2 L119.1 186.8 L119.3 187.1 L119.5 182.9 L119.7 190.0 L119.9 180.6 L120.1 185.5 L120.3 186.5 L120.5 183.3 L120.7 180.9 L120.9 183.2 L121.1 181.4 L121.3 184.0 L121.5 181.0 L121.7 181.2 L121.9 184.8 L122.1 180.5 L122.3 184.0 L122.5 184.4 L122.7 187.0 L122.9 185.0 L123.1 181.9 L123.3 188.2 L123.5 182.5 L123.7 183.4 L123.9 184.0 L124.1 191.0 L124.3 184.6 L124.5 182.2 L124.7 186.5 L124.9 184.3 L125.1 191.6 L125.3 183.0 L125.5 187.1 L125.7 182.5 L125.9 190.4 L126.1 182.9 L126.3 185.4 L126.5 182.5 L126.7 187.5 L126.9 186.4 L127.1 178.1 L127.3 186.9 L127.5 187.0 L127.7 185.8 L127.9 187.8 L128.1 181.2 L128.3 179.6 L128.5 186.7 L128.7 189.9 L128.9 181.4 L129.1 181.6 L129.3 182.4 L129.5 181.4 L129.7 187.0 L129.9 185.0 L130.1 188.3 L130.3 194.0 L130.5 203.1 L130.7 194.0 L130.9 177.7 L131.1 184.0 L131.3 186.2 L131.5 182.0 L131.7 179.4 L131.9 183.3 L132.1 188.1 L132.3 183.7 L132.5 180.8 L132.7 186.4 L132.9 187.1 L133.1 182.1 L133.3 184.4 L133.5 187.5 L133.7 185.5 L133.9 186.6 L134.1 183.9 L134.3 184.7 L134.5 181.7 L134.7 183.2 L134.9 190.1 L135.1 184.5 L135.3 182.9 L135.5 183.8 L135.7 182.0 L135.9 186.8 L136.1 188.0 L136.3 182.5 L136.5 188.2 L136.7 191.3 L136.9 182.4 L137.1 187.6 L137.3 186.3 L137.5 189.5 L137.7 189.2 L137.9 188.6 L138.1 186.6 L138.3 184.6 L138.5 192.3 L138.7 183.7 L138.9 189.5 L139.1 189.0 L139.3 183.7 L139.5 186.1 L139.7 190.1 L139.9 180.1 L140.1 187.9 L140.3 185.1 L140.5 185.0 L140.7 181.2 L140.9 186.3 L141.1 182.1 L141.3 187.3 L141.5 182.4 L141.7 187.5 L141.9 186.2 L142.1 179.3 L142.3 184.0 L142.5 184.5 L142.7 178.4 L142.9 183.9 L143.1 187.0 L143.3 182.9 L143.5 188.4 L143.7 181.9 L143.9 181.7 L144.1 187.0 L144.3 187.2 L144.5 184.8 L144.7 185.3 L144.9 188.1 L145.1 183.5 L145.3 191.3 L145.5 186.8 L145.7 186.8 L145.9 186.4 L146.1 184.7 L146.3 189.0 L146.5 183.9 L146.7 186.3 L146.9 187.5 L147.1 189.8 L147.3 189.1 L147.5 184.5 L147.7 188.2 L147.9 185.4 L148.1 182.6 L148.3 182.4 L148.5 181.1 L148.7 186.4 L148.9 188.9 L149.1 182.9 L149.3 185.0 L149.5 182.4 L149.7 194.9 L149.9 205.0 L150.1 194.9 L150.3 184.3 L150.5 184.9 L150.6 185.1 L150.8 185.8 L151.0 185.9 L151.2 183.4 L151.4 188.1 L151.6 181.8 L151.8 187.1 L152.0 184.0 L152.2 187.0 L152.4 187.6 L152.6 181.0 L152.8 187.6 L153.0 190.5 L153.2 188.6 L153.4 187.4 L153.6 180.5 L153.8 186.5 L154.0 183.9 L154.2 189.5 L154.4 185.5 L154.6 184.4 L154.8 181.3 L155.0 188.4 L155.2 184.6 L155.4 185.5 L155.6 189.6 L155.8 186.8 L156.0 187.6 L156.2 193.5 L156.4 184.9 L156.6 185.3 L156.8 188.4 L157.0 190.8 L157.2 182.5 L157.4 186.4 L157.6 184.3 L157.8 183.2 L158.0 188.6 L158.2 184.7 L158.4 187.9 L158.6 187.4 L158.8 187.3 L159.0 186.9 L159.2 183.7 L159.4 186.4 L159.6 187.2 L159.8 187.7 L160.0 185.8 L160.2 189.4 L160.4 188.2 L160.6 186.8 L160.8 188.5 L161.0 187.1 L161.2 188.6 L161.4 180.8 L161.6 182.3 L161.8 184.6 L162.0 186.4 L162.2 179.9 L162.4 185.4 L162.6 196.1 L162.8 207.3 L163.0 196.1 L163.2 182.7 L163.4 186.7 L163.6 180.3 L163.8 188.8 L164.0 184.2 L164.2 189.3 L164.4 181.4 L164.6 187.5 L164.8 186.5 L165.0 183.6 L165.2 183.0 L165.4 189.4 L165.6 191.5 L165.8 198.1 L166.0 191.5 L166.2 187.1 L166.4 187.7 L166.6 188.5 L166.8 187.5 L167.0 188.8 L167.2 185.3 L167.4 182.5 L167.6 192.4 L167.8 186.9 L168.0 187.7 L168.2 185.3 L168.4 189.4 L168.6 187.0 L168.8 189.5 L169.0 184.5 L169.2 186.2 L169.4 187.3 L169.6 186.0 L169.8 187.7 L170.0 191.4 L170.2 185.1 L170.4 186.0 L170.6 187.2 L170.8 183.8 L171.0 182.9 L171.2 189.6 L171.4 188.9 L171.6 182.2 L171.8 182.4 L172.0 188.3 L172.2 189.4 L172.4 188.1 L172.6 187.4 L172.8 190.6 L173.0 186.3 L173.2 189.9 L173.4 189.9 L173.6 183.7 L173.8 188.4 L174.0 186.4 L174.2 184.1 L174.4 183.5 L174.6 186.6 L174.8 185.3 L175.0 187.8 L175.2 180.3 L175.4 183.5 L175.6 188.6 L175.8 185.3 L176.0 183.2 L176.2 183.7 L176.4 179.7 L176.6 181.1 L176.8 186.6 L177.0 185.2 L177.2 188.6 L177.4 183.8 L177.6 184.1 L177.8 176.8 L178.0 184.3 L178.2 190.8 L178.4 186.9 L178.6 184.5 L178.8 188.5 L179.0 187.4 L179.2 186.3 L179.4 184.1 L179.6 185.7 L179.8 188.1 L180.0 183.7 L180.2 187.6 L180.4 187.1 L180.6 189.8 L180.8 188.1 L181.0 183.6 L181.2 190.1 L181.4 185.8 L181.6 183.4 L181.8 186.4 L182.0 184.7 L182.2 188.3 L182.4 181.2 L182.6 182.0 L182.8 184.6 L183.0 190.3 L183.2 188.3 L183.4 182.2 L183.6 179.9 L183.8 183.8 L184.0 181.1 L184.2 186.5 L184.4 185.4 L184.6 184.5 L184.8 183.3 L185.0 188.8 L185.2 181.9 L185.4 181.0 L185.6 188.2 L185.8 188.7 L185.9 183.6 L186.1 186.6 L186.3 191.5 L186.5 182.3 L186.7 184.3 L186.9 186.4 L187.1 178.5 L187.3 184.1 L187.5 186.5 L187.7 184.0 L187.9 186.8 L188.1 186.0 L188.3 182.6 L188.5 185.5 L188.7 185.3 L188.9 179.1 L189.1 181.7 L189.3 181.3 L189.5 182.1 L189.7 182.4 L189.9 179.7 L190.1 184.3 L190.3 178.9 L190.5 187.1 L190.7 185.2 L190.9 188.4 L191.1 185.0 L191.3 182.2 L191.5 179.7 L191.7 186.0 L191.9 183.8 L192.1 184.9 L192.3 186.2 L192.5 187.6 L192.7 184.0 L192.9 189.5 L193.1 184.2 L193.3 184.7 L193.5 186.5 L193.7 187.8 L193.9 189.0 L194.1 179.4 L194.3 188.4 L194.5 180.1 L194.7 182.7 L194.9 185.4 L195.1 187.9 L195.3 181.8 L195.5 179.7 L195.7 187.3 L195.9 185.8 L196.1 181.9 L196.3 184.1 L196.5 179.1 L196.7 186.6 L196.9 183.6 L197.1 188.7 L197.3 178.8 L197.5 186.9 L197.7 191.0 L197.9 184.9 L198.1 184.6 L198.3 178.8 L198.5 185.3 L198.7 184.1 L198.9 182.5 L199.1 179.8 L199.3 185.0 L199.5 181.5 L199.7 182.8 L199.9 185.3 L200.1 184.1 L200.3 184.4 L200.5 187.0 L200.7 181.0 L200.9 188.3 L201.1 180.6 L201.3 181.1 L201.5 184.4 L201.7 186.2 L201.9 184.7 L202.1 182.8 L202.3 182.2 L202.5 183.5 L202.7 181.9 L202.9 186.0 L203.1 183.7 L203.3 188.6 L203.5 181.7 L203.7 183.5 L203.9 185.3 L204.1 180.8 L204.3 182.3 L204.5 192.6 L204.7 184.1 L204.9 188.5 L205.1 181.2 L205.3 177.6 L205.5 186.4 L205.7 184.7 L205.9 185.8 L206.1 184.4 L206.3 183.6 L206.5 181.7 L206.7 188.7 L206.9 181.4 L207.1 188.5 L207.3 184.6 L207.5 182.2 L207.7 183.6 L207.9 188.5 L208.1 187.7 L208.3 186.8 L208.5 185.7 L208.7 182.2 L208.9 189.3 L209.1 184.4 L209.3 190.3 L209.5 195.7 L209.7 190.3 L209.9 180.9 L210.1 183.9 L210.3 182.7 L210.5 183.5 L210.7 179.5 L210.9 190.5 L211.1 181.4 L211.3 185.8 L211.5 186.1 L211.7 188.1 L211.9 190.2 L212.1 185.9 L212.3 186.6 L212.5 183.2 L212.7 188.7 L212.9 180.3 L213.1 183.8 L213.3 185.1 L213.5 186.4 L213.7 186.5 L213.9 187.3 L214.1 185.8 L214.3 184.0 L214.5 184.5 L214.7 187.9 L214.9 184.5 L215.1 186.7 L215.3 184.3 L215.5 179.6 L215.7 183.5 L215.9 186.2 L216.1 190.2 L216.3 189.5 L216.5 190.0 L216.7 183.1 L216.9 187.6 L217.1 185.3 L217.3 187.4 L217.5 185.3 L217.7 181.4 L217.9 187.9 L218.1 187.1 L218.3 188.4 L218.5 183.6 L218.7 189.1 L218.9 189.3 L219.1 189.9 L219.3 190.1 L219.5 184.5 L219.7 178.4 L219.9 188.9 L220.1 183.1 L220.3 185.3 L220.5 189.2 L220.7 187.1 L220.9 186.6 L221.1 188.0 L221.2 180.2 L221.4 191.3 L221.6 185.0 L221.8 185.6 L222.0 188.0 L222.2 186.0 L222.4 184.0 L222.6 186.0 L222.8 185.4 L223.0 184.4 L223.2 192.0 L223.4 181.9 L223.6 179.2 L223.8 182.5 L224.0 182.6 L224.2 189.7 L224.4 186.3 L224.6 188.2 L224.8 187.5 L225.0 182.9 L225.2 187.9 L225.4 185.9 L225.6 191.3 L225.8 186.2 L226.0 185.5 L226.2 188.1 L226.4 188.2 L226.6 180.7 L226.8 189.7 L227.0 189.6 L227.2 188.9 L227.4 183.2 L227.6 180.6 L227.8 185.8 L228.0 189.0 L228.2 187.8 L228.4 183.6 L228.6 189.4 L228.8 182.7 L229.0 182.4 L229.2 186.5 L229.4 184.7 L229.6 184.3 L229.8 181.6 L230.0 189.2 L230.2 182.7 L230.4 186.8 L230.6 187.8 L230.8 185.3 L231.0 186.3 L231.2 188.4 L231.4 189.9 L231.6 188.3 L231.8 182.0 L232.0 180.4 L232.2 184.1 L232.4 182.4 L232.6 187.3 L232.8 185.8 L233.0 184.6 L233.2 188.7 L233.4 188.1 L233.6 184.5 L233.8 185.6 L234.0 187.4 L234.2 183.0 L234.4 184.5 L234.6 181.0 L234.8 183.9 L235.0 184.4 L235.2 183.0 L235.4 184.1 L235.6 185.5 L235.8 184.8 L236.0 181.3 L236.2 181.7 L236.4 180.0 L236.6 188.4 L236.8 184.4 L237.0 184.8 L237.2 183.2 L237.4 185.1 L237.6 185.3 L237.8 181.7 L238.0 183.5 L238.2 187.2 L238.4 180.0 L238.6 180.8 L238.8 185.3 L239.0 181.1 L239.2 185.7 L239.4 180.5 L239.6 184.1 L239.8 185.7 L240.0 184.2 L240.2 185.4 L240.4 182.4 L240.6 182.6 L240.8 183.2 L241.0 185.0 L241.2 193.7 L241.4 183.0 L241.6 188.9 L241.8 182.9 L242.0 180.7 L242.2 183.1 L242.4 185.2 L242.6 184.4 L242.8 184.2 L243.0 185.4 L243.2 185.6 L243.4 186.7 L243.6 193.2 L243.8 201.5 L244.0 193.2 L244.2 184.6 L244.4 183.6 L244.6 184.5 L244.8 182.6 L245.0 181.4 L245.2 183.2 L245.4 186.0 L245.6 186.0 L245.8 178.9 L246.0 184.4 L246.2 184.5 L246.4 179.7 L246.6 181.1 L246.8 182.7 L247.0 185.5 L247.2 177.6 L247.4 183.3 L247.6 183.1 L247.8 185.0 L248.0 188.8 L248.2 188.6 L248.4 183.7 L248.6 183.7 L248.8 185.3 L249.0 187.9 L249.2 188.7 L249.4 185.1 L249.6 188.6 L249.8 181.6 L250.0 180.6 L250.2 175.6 L250.4 181.1 L250.6 185.6 L250.8 186.6 L251.0 194.1 L251.2 185.7 L251.4 184.3 L251.6 180.9 L251.8 182.1 L252.0 181.8 L252.2 183.1 L252.4 181.6 L252.6 179.5 L252.8 186.8 L253.0 185.2 L253.2 187.6 L253.4 178.9 L253.6 180.0 L253.8 181.7 L254.0 187.4 L254.2 183.7 L254.4 185.2 L254.6 184.2 L254.8 184.9 L255.0 182.7 L255.2 185.3 L255.4 181.5 L255.6 183.3 L255.8 184.8 L256.0 184.1 L256.2 184.9 L256.4 181.5 L256.5 184.7 L256.7 183.2 L256.9 185.3 L257.1 188.7 L257.3 182.0 L257.5 196.7 L257.7 208.4 L257.9 196.7 L258.1 189.6 L258.3 187.8 L258.5 186.3 L258.7 186.8 L258.9 187.9 L259.1 182.2 L259.3 185.0 L259.5 183.2 L259.7 185.7 L259.9 183.6 L260.1 186.7 L260.3 184.7 L260.5 182.7 L260.7 184.6 L260.9 185.9 L261.1 188.2 L261.3 184.5 L261.5 183.9 L261.7 185.8 L261.9 187.2 L262.1 183.2 L262.3 177.6 L262.5 185.9 L262.7 184.3 L262.9 184.6 L263.1 193.2 L263.3 185.4 L263.5 187.9 L263.7 181.8 L263.9 186.8 L264.1 188.4 L264.3 186.8 L264.5 185.7 L264.7 187.7 L264.9 186.0 L265.1 189.6 L265.3 186.4 L265.5 183.6 L265.7 180.2 L265.9 183.7 L266.1 184.9 L266.3 182.3 L266.5 182.5 L266.7 181.2 L266.9 183.0 L267.1 186.6 L267.3 185.7 L267.5 185.9 L267.7 185.6 L267.9 186.1 L268.1 189.0 L268.3 192.4 L268.5 188.1 L268.7 191.9 L268.9 185.9 L269.1 185.9 L269.3 190.6 L269.5 183.8 L269.7 183.3 L269.9 185.4 L270.1 180.7 L270.3 180.0 L270.5 188.8 L270.7 182.4 L270.9 183.9 L271.1 184.2 L271.3 182.8 L271.5 187.5 L271.7 187.2 L271.9 187.4 L272.1 187.0 L272.3 185.3 L272.5 189.0 L272.7 187.8 L272.9 183.4 L273.1 185.5 L273.3 184.2 L273.5 190.9 L273.7 187.5 L273.9 187.2 L274.1 185.8 L274.3 187.6 L274.5 183.5 L274.7 186.0 L274.9 185.7 L275.1 185.9 L275.3 183.7 L275.5 187.3 L275.7 182.7 L275.9 184.5 L276.1 185.4 L276.3 186.0 L276.5 184.9 L276.7 183.4 L276.9 183.4 L277.1 184.9 L277.3 183.7 L277.5 185.5 L277.7 181.8 L277.9 185.8 L278.1 191.8 L278.3 181.5 L278.5 184.8 L278.7 188.2 L278.9 185.4 L279.1 187.1 L279.3 178.6 L279.5 183.2 L279.7 189.2 L279.9 183.4 L280.1 186.4 L280.3 179.7 L280.5 188.4 L280.7 192.1 L280.9 185.4 L281.1 186.3 L281.3 186.4 L281.5 191.1 L281.7 183.8 L281.9 179.9 L282.1 190.1 L282.3 181.2 L282.5 186.1 L282.7 177.8 L282.9 183.2 L283.1 185.0 L283.3 181.5 L283.5 182.9 L283.7 186.3 L283.9 182.4 L284.1 186.0 L284.3 189.6 L284.5 178.5 L284.7 185.6 L284.9 186.6 L285.1 184.2 L285.3 189.6 L285.5 189.1 L285.7 186.9 L285.9 187.0 L286.1 185.4 L286.3 182.5 L286.5 187.2 L286.7 184.4 L286.9 183.9 L287.1 188.3 L287.3 184.3 L287.5 187.6 L287.7 181.9 L287.9 183.5 L288.1 184.8 L288.3 188.7 L288.5 184.4 L288.7 187.0 L288.9 182.7 L289.1 185.3 L289.3 187.0 L289.5 182.1 L289.7 182.8 L289.9 186.6 L290.1 181.5 L290.3 185.5 L290.5 185.7 L290.7 184.4 L290.9 187.4 L291.1 186.6 L291.3 185.6 L291.5 180.7 L291.6 180.8 L291.8 186.0 L292.0 180.5 L292.2 185.3 L292.4 184.1 L292.6 182.3 L292.8 184.2 L293.0 177.9 L293.2 184.0 L293.4 188.6 L293.6 181.5 L293.8 186.3 L294.0 185.9 L294.2 194.0 L294.4 182.5 L294.6 183.1 L294.8 183.3 L295.0 183.4 L295.2 181.6 L295.4 186.7 L295.6 184.0 L295.8 188.9 L296.0 187.6 L296.2 183.2 L296.4 185.3 L296.6 190.0 L296.8 184.9 L297.0 186.3 L297.2 188.3 L297.4 184.6 L297.6 187.0 L297.8 190.2 L298.0 189.2 L298.2 181.0 L298.4 190.4 L298.6 185.4 L298.8 184.3 L299.0 184.2 L299.2 189.6 L299.4 186.9 L299.6 185.3 L299.8 183.3 L300.0 187.5 L300.2 189.2 L300.4 182.8 L300.6 182.5 L300.8 184.3 L301.0 186.7 L301.2 184.0 L301.4 184.8 L301.6 182.7 L301.8 189.0 L302.0 185.2 L302.2 185.7 L302.4 188.4 L302.6 184.8 L302.8 185.2 L303.0 186.0 L303.2 183.7 L303.4 188.9 L303.6 185.0 L303.8 183.6 L304.0 184.0 L304.2 181.7 L304.4 188.0 L304.6 188.8 L304.8 183.8 L305.0 183.2 L305.2 178.8 L305.4 183.2 L305.6 187.4 L305.8 182.7 L306.0 187.2 L306.2 189.1 L306.4 177.3 L306.6 183.7 L306.8 182.2 L307.0 182.5 L307.2 178.7 L307.4 183.1 L307.6 180.5 L307.8 187.3 L308.0 188.4 L308.2 180.3 L308.4 180.3 L308.6 183.0 L308.8 183.8 L309.0 184.3 L309.2 186.9 L309.4 180.0 L309.6 182.4 L309.8 182.8 L310.0 183.0 L310.2 181.2 L310.4 182.9 L310.6 181.9 L310.8 187.6 L311.0 183.0 L311.2 178.1 L311.4 185.7 L311.6 184.6 L311.8 181.7 L312.0 181.6 L312.2 182.3 L312.4 189.1 L312.6 182.9 L312.8 188.0 L313.0 187.1 L313.2 182.8 L313.4 185.1 L313.6 181.7 L313.8 174.9 L314.0 182.0 L314.2 182.1 L314.4 186.6 L314.6 186.0 L314.8 187.1 L315.0 185.5 L315.2 187.1 L315.4 185.8 L315.6 184.6 L315.8 186.7 L316.0 188.0 L316.2 188.0 L316.4 182.3 L316.6 183.6 L316.8 180.8 L317.0 180.6 L317.2 184.2 L317.4 181.4 L317.6 187.5 L317.8 176.6 L318.0 179.7 L318.2 183.9 L318.4 186.6 L318.6 182.2 L318.8 188.4 L319.0 185.4 L319.2 181.0 L319.4 183.2 L319.6 184.7 L319.8 180.4 L320.0 186.2 L320.2 182.6 L320.4 185.0 L320.6 186.1 L320.8 182.4 L321.0 186.5 L321.2 178.2 L321.4 185.9 L321.6 178.7 L321.8 187.7 L322.0 182.4 L322.2 187.5 L322.4 188.0 L322.6 183.9 L322.8 182.4 L323.0 187.9 L323.2 180.9 L323.4 186.9 L323.6 184.5 L323.8 183.4 L324.0 182.2 L324.2 188.8 L324.4 179.0 L324.6 181.9 L324.8 185.0 L325.0 186.6 L325.2 189.0 L325.4 188.2 L325.6 182.7 L325.8 185.1 L326.0 187.3 L326.2 185.5 L326.4 179.5 L326.6 185.2 L326.8 186.1 L326.9 180.4 L327.1 183.2 L327.3 184.4 L327.5 186.4 L327.7 189.5 L327.9 188.6 L328.1 187.0 L328.3 188.0 L328.5 191.1 L328.7 188.0 L328.9 184.7 L329.1 184.9 L329.3 187.9 L329.5 191.1 L329.7 186.5 L329.9 187.7 L330.1 186.9 L330.3 186.1 L330.5 188.8 L330.7 188.6 L330.9 185.9 L331.1 185.5 L331.3 187.8 L331.5 184.2 L331.7 186.3 L331.9 189.1 L332.1 186.0 L332.3 180.8 L332.5 188.5 L332.7 183.1 L332.9 182.7 L333.1 182.2 L333.3 189.2 L333.5 181.1 L333.7 186.6 L333.9 187.5 L334.1 187.8 L334.3 184.9 L334.5 186.5 L334.7 187.0 L334.9 182.5 L335.1 188.0 L335.3 188.7 L335.5 183.5 L335.7 183.4 L335.9 182.2 L336.1 188.5 L336.3 181.9 L336.5 183.6 L336.7 180.0 L336.9 188.6 L337.1 184.0 L337.3 185.4 L337.5 188.9 L337.7 186.3 L337.9 181.4 L338.1 186.0 L338.3 186.9 L338.5 182.3 L338.7 182.0 L338.9 182.2 L339.1 187.2 L339.3 184.9 L339.5 181.6 L339.7 186.4 L339.9 186.5 L340.1 181.9 L340.3 180.0 L340.5 187.6 L340.7 191.6 L340.9 188.4 L341.1 187.0 L341.3 184.2 L341.5 182.0 L341.7 184.3 L341.9 186.1 L342.1 183.3 L342.3 186.9 L342.5 184.1 L342.7 186.0 L342.9 176.5 L343.1 182.1 L343.3 186.9 L343.5 187.2 L343.7 185.6 L343.9 189.0 L344.1 198.1 L344.3 255.8 L344.5 298.5" fill="none" stroke="#a62bcb" stroke-width="1.3"/></svg>
<div style="position:absolute;left:583px;top:132px;width:376px;height:359px;border:1px solid #cfcfcf;border-radius:3px;box-sizing:border-box;background:#fff;box-shadow:0 1px 1px rgba(0,0,0,0.04)"></div>
<div style="position:absolute;left:584px;top:133px;width:374px;height:26px;background:#f7f7f7"></div>
<div class="t" style="left:591px;top:140px;font-size:11px;color:#2b2b2b;font-weight:700;transform:scaleX(0.9246);">Memory</div>
<svg style="position:absolute;left:940px;top:140px;" width="12" height="11" viewBox="0 0 12 11"><path d="M5.5 0.5 L5.5 7 M2 4 L5.5 7.5 L9 4" fill="none" stroke="#0b5cb5" stroke-width="1.6"/><rect x="0" y="9" width="11.5" height="1.6" fill="#0b5cb5"/></svg>
<div class="t r" style="left:640px;top:166px;font-size:9.5px;color:#555;transform:scaleX(0.9271);">x-axis</div>
<div class="t r" style="left:746px;top:166px;font-size:9.5px;color:#555;transform:scaleX(0.9271);">y-axis</div>
<div style="position:absolute;left:640px;top:179px;width:100px;height:18px;background:#f1f1f1;border-radius:3px"></div>
<div style="position:absolute;left:746px;top:179px;width:100px;height:18px;background:#f1f1f1;border-radius:3px"></div>
<div class="t" style="left:673px;top:183px;font-size:11.7px;color:#1c62b0;font-weight:700;transform:scaleX(0.8282);">Step</div>
<div class="t" style="left:775px;top:183px;font-size:11.7px;color:#1c62b0;font-weight:700;transform:scaleX(0.8544);">Linear</div>
<svg style="position:absolute;left:720px;top:187px;" width="8" height="5" viewBox="0 0 8 5"><path d="M0 0 L7 0 L3.5 4 Z" fill="#0b5cb5"/></svg>
<svg style="position:absolute;left:826px;top:187px;" width="8" height="5" viewBox="0 0 8 5"><path d="M0 0 L7 0 L3.5 4 Z" fill="#0b5cb5"/></svg>
<svg style="position:absolute;left:936px;top:180px;" width="14" height="15" viewBox="0 0 14 15"><path d="M3.2 4.2 A5.2 5.2 0 1 1 2.3 9.5" fill="none" stroke="#5b9bd5" stroke-width="1.7"/><path d="M0.8 1.8 L1.3 6.5 L5.8 5.6 Z" fill="#5b9bd5"/></svg>
<div style="position:absolute;left:935px;top:204px;width:15px;height:12px;background:#dcdcdc"></div>
<svg style="position:absolute;left:935px;top:204px;" width="15" height="12" viewBox="0 0 15 12"><path d="M2 9.8 C4.5 5.5 7.2 2.9 10 2.9 C11.2 2.9 11.9 3.5 12.4 4.6" fill="none" stroke="#222" stroke-width="1.3"/></svg>
<div style="position:absolute;left:941px;top:231px;width:2px;height:214px;background:#dadada"></div>
<div style="position:absolute;left:936px;top:439px;width:12px;height:12px;border-radius:50%;background:#0b5cb5;border:0.8px solid #e8f4f8;box-sizing:border-box;box-shadow:1px 1px 2px rgba(0,0,0,0.3)"></div>
<div style="position:absolute;left:935px;top:461px;width:15px;height:12px;background:#dcdcdc"></div>
<svg style="position:absolute;left:935px;top:461px;" width="15" height="12" viewBox="0 0 15 12"><path d="M1.5 10 L4.2 7 L6.5 9.8 L9.5 2.8 L12 6" fill="none" stroke="#222" stroke-width="1.2"/></svg>
<div class="t r" style="left:621.5px;top:402px;font-size:11px;color:#3a3a3a;transform:scaleX(0.8378);">2 GB</div>
<div class="t r" style="left:621.5px;top:373px;font-size:11px;color:#3a3a3a;transform:scaleX(0.8378);">4 GB</div>
<div class="t r" style="left:621.5px;top:343px;font-size:11px;color:#3a3a3a;transform:scaleX(0.8378);">6 GB</div>
<div class="t r" style="left:621.5px;top:314px;font-size:11px;color:#3a3a3a;transform:scaleX(0.8378);">8 GB</div>
<div class="t r" style="left:616.5px;top:285px;font-size:11px;color:#3a3a3a;transform:scaleX(0.8337);">10 GB</div>
<div class="t r" style="left:616.5px;top:255px;font-size:11px;color:#3a3a3a;transform:scaleX(0.8337);">12 GB</div>
<div class="t r" style="left:616.5px;top:226px;font-size:11px;color:#3a3a3a;transform:scaleX(0.8337);">14 GB</div>
<div class="t r" style="left:620.5px;top:425.5px;font-size:11px;color:#3a3a3a;transform:scaleX(0.8776);">0 GB</div>
<div class="t r" style="left:636.0px;top:440px;font-size:11px;color:#3a3a3a;transform:scaleX(0.8875);">0.00</div>
<div class="t r" style="left:706.65px;top:440px;font-size:11px;color:#3a3a3a;transform:scaleX(0.8860);">1.00e+3</div>
<div class="t r" style="left:785.55px;top:440px;font-size:11px;color:#3a3a3a;transform:scaleX(0.8860);">2.00e+3</div>
<div class="t r" style="left:864.45px;top:440px;font-size:11px;color:#3a3a3a;transform:scaleX(0.8860);">3.00e+3</div>
<svg style="position:absolute;left:640px;top:460px;" width="14" height="10" viewBox="0 0 14 10"><path d="M1 5 L13 5" stroke="#3d9df0" stroke-width="1.5"/><circle cx="7" cy="5" r="3.2" fill="#3d9df0"/></svg>
<div class="t r" style="left:660px;top:460px;font-size:11px;color:#1c62b0;transform:scaleX(1.0069);">memory</div>
<svg style="position:absolute;left:583px;top:132px" width="376" height="359" viewBox="0 0 376 359"><rect x="140.5" y="71" width="1" height="231" fill="#e3e3e3"/><rect x="219.4" y="71" width="1" height="231" fill="#e3e3e3"/><rect x="298.3" y="71" width="1" height="231" fill="#e3e3e3"/><rect x="62" y="272.6" width="283" height="1" fill="#e3e3e3"/><rect x="62" y="243.2" width="283" height="1" fill="#e3e3e3"/><rect x="62" y="213.8" width="283" height="1" fill="#e3e3e3"/><rect x="62" y="184.4" width="283" height="1" fill="#e3e3e3"/><rect x="62" y="155.0" width="283" height="1" fill="#e3e3e3"/><rect x="62" y="125.6" width="283" height="1" fill="#e3e3e3"/><rect x="62" y="96.2" width="283" height="1" fill="#e3e3e3"/><rect x="62" y="71" width="1" height="232" fill="#cfcfcf"/><rect x="62" y="302" width="283" height="1" fill="#cfcfcf"/><path d="M62.0 277.0 L62.0 255.3 L65.5 255.3 L66.5 259.4 L69.0 259.7 L70.0 259.6 L72.0 259.6 L74.0 259.6 L76.0 259.6 L78.0 259.6 L80.0 259.6 L82.0 259.6 L84.0 259.5 L86.0 259.5 L88.0 259.5 L90.0 259.5 L92.0 259.5 L94.0 259.5 L96.0 259.5 L98.0 259.5 L100.0 259.5 L102.0 259.5 L104.0 259.4 L106.0 259.4 L108.0 259.4 L110.0 259.4 L112.0 259.4 L114.0 259.4 L116.0 259.4 L116.5 257.5 L117.0 259.4 L118.0 259.4 L120.0 259.4 L122.0 259.3 L124.0 259.3 L126.0 259.3 L128.0 259.3 L130.0 259.3 L132.0 259.3 L134.0 259.3 L136.0 259.3 L138.0 259.2 L140.0 259.2 L142.0 259.2 L144.0 259.2 L146.0 259.2 L148.0 259.2 L150.0 259.2 L150.5 257.3 L151.0 259.2 L152.0 259.1 L154.0 259.1 L156.0 259.1 L158.0 259.1 L160.0 259.1 L162.0 259.1 L164.0 259.1 L166.0 259.1 L168.0 259.0 L170.0 259.0 L172.0 259.0 L174.0 259.0 L176.0 259.0 L178.0 259.0 L180.0 258.9 L182.0 258.9 L184.0 258.9 L186.0 258.9 L188.0 258.9 L190.0 258.9 L192.0 258.8 L192.5 256.9 L193.0 258.8 L194.0 258.8 L196.0 258.8 L198.0 258.8 L200.0 258.8 L202.0 258.8 L204.0 258.7 L206.0 258.7 L208.0 258.7 L210.0 258.7 L212.0 258.7 L214.0 258.6 L216.0 258.6 L218.0 258.6 L220.0 258.6 L222.0 258.6 L224.0 258.5 L226.0 258.5 L228.0 258.5 L230.0 258.5 L232.0 258.5 L234.0 258.4 L236.0 258.4 L238.0 258.4 L240.0 258.4 L242.0 258.4 L244.0 258.3 L246.0 258.3 L248.0 258.3 L250.0 258.3 L252.0 258.2 L254.0 258.2 L256.0 258.2 L258.0 258.2 L260.0 258.1 L262.0 258.1 L264.0 258.1 L266.0 258.1 L268.0 258.0 L270.0 258.0 L272.0 258.0 L274.0 257.9 L274.5 256.0 L275.0 257.9 L276.0 257.9 L278.0 257.9 L280.0 257.9 L282.0 257.8 L284.0 257.8 L286.0 257.8 L288.0 257.7 L290.0 257.7 L292.0 257.7 L294.0 257.6 L296.0 257.6 L298.0 257.6 L300.0 257.6 L302.0 257.5 L302.5 255.6 L303.0 257.5 L304.0 257.5 L306.0 257.5 L308.0 257.4 L310.0 257.4 L312.0 257.4 L314.0 257.3 L316.0 257.3 L318.0 257.2 L320.0 257.2 L322.0 257.2 L324.0 257.1 L326.0 257.1 L328.0 257.1 L330.0 257.0 L332.0 257.0 L334.0 256.9 L336.0 256.9 L338.0 256.9 L340.0 256.8 L340.5 254.9 L341.0 256.8 L342.0 256.8 L344.0 256.7" fill="none" stroke="#3d9df0" stroke-width="1.3" stroke-linejoin="round"/><path d="M170.5 71 L170.5 296" stroke="#222" stroke-width="1" stroke-dasharray="3 2"/><circle cx="170.5" cy="258.8" r="2.6" fill="#3d9df0" stroke="#7fbdf5" stroke-width="0.8"/><circle cx="170.5" cy="258.8" r="1.3" fill="#2a74c0"/></svg>
<div style="position:absolute;left:972px;top:132px;width:376px;height:359px;border:1px solid #cfcfcf;border-radius:3px;box-sizing:border-box;background:#fff;box-shadow:0 1px 1px rgba(0,0,0,0.04)"></div>
<div style="position:absolute;left:973px;top:133px;width:374px;height:26px;background:#f7f7f7"></div>
<div class="t" style="left:980px;top:140px;font-size:11px;color:#2b2b2b;font-weight:700;transform:scaleX(0.7971);">GPU</div>
<svg style="position:absolute;left:1329px;top:140px;" width="12" height="11" viewBox="0 0 12 11"><path d="M5.5 0.5 L5.5 7 M2 4 L5.5 7.5 L9 4" fill="none" stroke="#0b5cb5" stroke-width="1.6"/><rect x="0" y="9" width="11.5" height="1.6" fill="#0b5cb5"/></svg>
<div class="t r" style="left:1029px;top:166px;font-size:9.5px;color:#555;transform:scaleX(0.9271);">x-axis</div>
<div class="t r" style="left:1135px;top:166px;font-size:9.5px;color:#555;transform:scaleX(0.9271);">y-axis</div>
<div style="position:absolute;left:1029px;top:179px;width:100px;height:18px;background:#f1f1f1;border-radius:3px"></div>
<div style="position:absolute;left:1135px;top:179px;width:100px;height:18px;background:#f1f1f1;border-radius:3px"></div>
<div class="t" style="left:1062px;top:183px;font-size:11.7px;color:#1c62b0;font-weight:700;transform:scaleX(0.8282);">Step</div>
<div class="t" style="left:1164px;top:183px;font-size:11.7px;color:#1c62b0;font-weight:700;transform:scaleX(0.8544);">Linear</div>
<svg style="position:absolute;left:1109px;top:187px;" width="8" height="5" viewBox="0 0 8 5"><path d="M0 0 L7 0 L3.5 4 Z" fill="#0b5cb5"/></svg>
<svg style="position:absolute;left:1215px;top:187px;" width="8" height="5" viewBox="0 0 8 5"><path d="M0 0 L7 0 L3.5 4 Z" fill="#0b5cb5"/></svg>
<svg style="position:absolute;left:1325px;top:180px;" width="14" height="15" viewBox="0 0 14 15"><path d="M3.2 4.2 A5.2 5.2 0 1 1 2.3 9.5" fill="none" stroke="#5b9bd5" stroke-width="1.7"/><path d="M0.8 1.8 L1.3 6.5 L5.8 5.6 Z" fill="#5b9bd5"/></svg>
<div style="position:absolute;left:1324px;top:204px;width:15px;height:12px;background:#ececec"></div>
<svg style="position:absolute;left:1324px;top:204px;" width="15" height="12" viewBox="0 0 15 12"><path d="M2 9.8 C4.5 5.5 7.2 2.9 10 2.9 C11.2 2.9 11.9 3.5 12.4 4.6" fill="none" stroke="#777" stroke-width="0.9"/></svg>
<div style="position:absolute;left:1330px;top:231px;width:2px;height:214px;background:#dadada"></div>
<div style="position:absolute;left:1325px;top:439px;width:12px;height:12px;border-radius:50%;background:#8aa3ae;border:0.8px solid #e8f4f8;box-sizing:border-box;box-shadow:1px 1px 2px rgba(0,0,0,0.3)"></div>
<div style="position:absolute;left:1324px;top:461px;width:15px;height:12px;background:#ececec"></div>
<svg style="position:absolute;left:1324px;top:461px;" width="15" height="12" viewBox="0 0 15 12"><path d="M1.5 10 L4.2 7 L6.5 9.8 L9.5 2.8 L12 6" fill="none" stroke="#666" stroke-width="0.9"/></svg>
<div class="t r" style="left:1003.0px;top:205px;font-size:11px;color:#3a3a3a;transform:scaleX(0.8817);">100 %</div>
<div class="t r" style="left:1008.3px;top:246px;font-size:11px;color:#3a3a3a;transform:scaleX(0.8854);">80 %</div>
<div class="t r" style="left:1008.3px;top:292.2px;font-size:11px;color:#3a3a3a;transform:scaleX(0.8854);">60 %</div>
<div class="t r" style="left:1008.3px;top:338.4px;font-size:11px;color:#3a3a3a;transform:scaleX(0.8854);">40 %</div>
<div class="t r" style="left:1008.3px;top:384.6px;font-size:11px;color:#3a3a3a;transform:scaleX(0.8854);">20 %</div>
<div class="t r" style="left:1014.2px;top:425px;font-size:11px;color:#3a3a3a;transform:scaleX(0.8600);">0 %</div>
<div class="t r" style="left:1025.0px;top:440px;font-size:11px;color:#3a3a3a;transform:scaleX(0.8875);">0.00</div>
<div class="t r" style="left:1096.15px;top:440px;font-size:11px;color:#3a3a3a;transform:scaleX(0.8860);">1.00e+3</div>
<div class="t r" style="left:1175.55px;top:440px;font-size:11px;color:#3a3a3a;transform:scaleX(0.8860);">2.00e+3</div>
<div class="t r" style="left:1254.95px;top:440px;font-size:11px;color:#3a3a3a;transform:scaleX(0.8860);">3.00e+3</div>
<svg style="position:absolute;left:1029px;top:460px;" width="14" height="10" viewBox="0 0 14 10"><path d="M1 5 L13 5" stroke="#1e9b60" stroke-width="1.5"/><circle cx="7" cy="5" r="3.2" fill="#1e9b60"/></svg>
<div class="t r" style="left:1049px;top:460px;font-size:11px;color:#1c62b0;transform:scaleX(1.0897);">gpu</div>
<svg style="position:absolute;left:972px;top:132px" width="376" height="359" viewBox="0 0 376 359"><rect x="141.0" y="71" width="1" height="231" fill="#e3e3e3"/><rect x="220.4" y="71" width="1" height="231" fill="#e3e3e3"/><rect x="299.8" y="71" width="1" height="231" fill="#e3e3e3"/><rect x="62" y="255.8" width="283" height="1" fill="#e3e3e3"/><rect x="62" y="209.6" width="283" height="1" fill="#e3e3e3"/><rect x="62" y="163.4" width="283" height="1" fill="#e3e3e3"/><rect x="62" y="117.2" width="283" height="1" fill="#e3e3e3"/><rect x="62" y="71" width="1" height="232" fill="#cfcfcf"/><rect x="62" y="302" width="283" height="1" fill="#cfcfcf"/><path d="M62.5 193.0 L62.7 162.6 L63.0 182.0 L63.2 171.6 L63.5 164.8 L63.7 189.8 L64.0 196.6 L64.2 178.0 L64.5 200.3 L64.7 176.2 L65.0 154.6 L65.2 162.2 L65.5 199.3 L65.7 226.4 L66.0 189.5 L66.2 191.6 L66.5 154.7 L66.7 199.4 L67.0 194.1 L67.2 165.8 L67.5 202.2 L67.7 192.7 L68.0 144.9 L68.2 144.9 L68.5 169.0 L68.7 179.9 L69.0 217.0 L69.2 171.2 L69.5 186.2 L69.7 181.3 L70.0 203.5 L70.2 188.3 L70.5 193.4 L70.7 178.5 L71.0 145.1 L71.2 177.1 L71.5 237.6 L71.7 217.0 L72.0 235.4 L72.2 211.7 L72.5 171.2 L72.7 175.9 L73.0 205.9 L73.2 179.9 L73.5 210.6 L73.7 230.5 L74.0 230.1 L74.2 213.7 L74.5 145.4 L74.7 228.1 L75.0 150.7 L75.2 148.2 L75.5 193.4 L75.7 189.4 L76.0 206.4 L76.2 188.7 L76.5 168.3 L76.7 187.7 L77.0 158.1 L77.2 152.5 L77.5 177.7 L77.7 178.2 L78.0 189.9 L78.2 177.7 L78.5 221.4 L78.7 175.9 L79.0 181.9 L79.2 213.9 L79.5 144.9 L79.7 217.2 L80.0 214.1 L80.2 179.7 L80.5 246.1 L80.7 211.8 L81.0 233.8 L81.2 217.0 L81.4 192.1 L81.7 178.5 L81.9 155.0 L82.2 163.9 L82.4 152.6 L82.7 170.5 L82.9 202.1 L83.2 154.7 L83.4 202.7 L83.7 206.5 L83.9 144.9 L84.2 164.5 L84.4 181.6 L84.7 165.6 L84.9 161.8 L85.2 229.0 L85.4 191.0 L85.7 223.5 L85.9 184.5 L86.2 208.3 L86.4 147.4 L86.7 172.6 L86.9 212.5 L87.2 188.7 L87.4 224.5 L87.7 186.9 L87.9 171.8 L88.2 180.3 L88.4 246.1 L88.7 198.2 L88.9 172.9 L89.2 179.0 L89.4 153.4 L89.7 226.8 L89.9 172.5 L90.2 207.7 L90.4 182.3 L90.7 176.0 L90.9 167.6 L91.2 205.5 L91.4 182.7 L91.7 223.3 L91.9 230.6 L92.2 171.5 L92.4 189.9 L92.7 236.8 L92.9 213.7 L93.2 187.7 L93.4 144.9 L93.7 156.9 L93.9 164.3 L94.2 241.8 L94.4 191.2 L94.7 173.9 L94.9 176.4 L95.2 175.8 L95.4 195.2 L95.7 144.9 L95.9 144.9 L96.2 191.1 L96.4 217.7 L96.7 144.9 L96.9 204.8 L97.2 152.3 L97.4 144.9 L97.7 216.6 L97.9 179.5 L98.2 198.7 L98.4 172.8 L98.7 178.6 L98.9 144.9 L99.2 170.5 L99.4 188.5 L99.7 154.5 L99.9 196.4 L100.1 199.2 L100.4 144.9 L100.6 212.9 L100.9 202.9 L101.1 186.9 L101.4 220.0 L101.6 251.6 L101.9 156.6 L102.1 211.8 L102.4 204.5 L102.6 199.4 L102.9 217.7 L103.1 220.5 L103.4 183.4 L103.6 144.9 L103.9 166.2 L104.1 165.8 L104.4 233.5 L104.6 189.0 L104.9 223.8 L105.1 165.1 L105.4 195.1 L105.6 187.1 L105.9 190.9 L106.1 205.8 L106.4 234.0 L106.6 170.9 L106.9 229.8 L107.1 223.7 L107.4 197.2 L107.6 209.5 L107.9 180.4 L108.1 157.9 L108.4 180.8 L108.6 182.4 L108.9 187.6 L109.1 162.5 L109.4 243.7 L109.6 177.2 L109.9 216.3 L110.1 225.3 L110.4 188.1 L110.6 199.9 L110.9 170.8 L111.1 155.2 L111.4 258.1 L111.6 190.4 L111.9 144.9 L112.1 162.2 L112.4 144.9 L112.6 185.2 L112.9 231.4 L113.1 222.1 L113.4 166.9 L113.6 159.5 L113.9 210.2 L114.1 196.3 L114.4 180.4 L114.6 240.8 L114.9 198.8 L115.1 144.9 L115.4 144.9 L115.6 191.5 L115.9 144.9 L116.1 204.0 L116.4 212.6 L116.6 255.5 L116.9 159.5 L117.1 199.5 L117.4 144.9 L117.6 178.3 L117.9 182.6 L118.1 242.5 L118.4 144.9 L118.6 199.1 L118.9 193.1 L119.1 254.5 L119.3 160.4 L119.6 158.5 L119.8 206.4 L120.1 185.4 L120.3 176.4 L120.6 159.3 L120.8 185.1 L121.1 144.9 L121.3 195.5 L121.6 206.4 L121.8 202.2 L122.1 264.4 L122.3 212.4 L122.6 157.9 L122.8 180.2 L123.1 212.8 L123.3 177.7 L123.6 248.8 L123.8 196.7 L124.1 172.4 L124.3 167.2 L124.6 211.4 L124.8 160.7 L125.1 144.9 L125.3 201.0 L125.6 165.9 L125.8 234.9 L126.1 247.0 L126.3 169.7 L126.6 186.8 L126.8 182.1 L127.1 205.6 L127.3 196.9 L127.6 163.7 L127.8 144.9 L128.1 194.6 L128.3 237.6 L128.6 149.8 L128.8 170.0 L129.1 167.6 L129.3 182.6 L129.6 144.9 L129.8 185.8 L130.1 172.6 L130.3 243.7 L130.6 205.4 L130.8 208.7 L131.1 188.9 L131.3 177.6 L131.6 210.6 L131.8 144.9 L132.1 220.0 L132.3 201.6 L132.6 180.9 L132.8 225.6 L133.1 170.9 L133.3 169.0 L133.6 196.8 L133.8 144.9 L134.1 185.6 L134.3 179.6 L134.6 216.9 L134.8 238.3 L135.1 207.0 L135.3 197.7 L135.6 201.7 L135.8 164.9 L136.1 259.7 L136.3 222.1 L136.6 242.9 L136.8 147.7 L137.1 205.0 L137.3 203.5 L137.6 221.1 L137.8 161.0 L138.0 200.4 L138.3 181.4 L138.5 249.2 L138.8 152.8 L139.0 176.2 L139.3 171.4 L139.5 150.9 L139.8 193.8 L140.0 193.0 L140.3 166.4 L140.5 175.2 L140.8 195.4 L141.0 186.7 L141.3 203.2 L141.5 166.5 L141.8 159.9 L142.0 187.8 L142.3 144.9 L142.5 234.2 L142.8 195.0 L143.0 144.9 L143.3 200.6 L143.5 236.1 L143.8 146.0 L144.0 171.5 L144.3 223.9 L144.5 164.6 L144.8 218.7 L145.0 228.3 L145.3 192.5 L145.5 202.4 L145.8 221.0 L146.0 198.9 L146.3 218.2 L146.5 186.1 L146.8 188.6 L147.0 165.5 L147.3 201.6 L147.5 228.0 L147.8 227.6 L148.0 195.3 L148.3 144.9 L148.5 162.4 L148.8 207.2 L149.0 159.6 L149.3 222.8 L149.5 157.4 L149.8 199.4 L150.0 164.8 L150.3 169.2 L150.5 196.3 L150.8 178.0 L151.0 220.0 L151.3 190.1 L151.5 155.3 L151.8 144.9 L152.0 166.7 L152.3 185.3 L152.5 218.4 L152.8 156.0 L153.0 237.8 L153.3 212.1 L153.5 177.1 L153.8 224.2 L154.0 144.9 L154.3 155.0 L154.5 205.0 L154.8 204.6 L155.0 227.6 L155.3 230.1 L155.5 174.6 L155.8 169.1 L156.0 177.3 L156.3 179.9 L156.5 204.8 L156.7 177.0 L157.0 232.2 L157.2 187.6 L157.5 144.9 L157.7 148.0 L158.0 201.8 L158.2 198.0 L158.5 146.4 L158.7 144.9 L159.0 233.0 L159.2 200.7 L159.5 180.8 L159.7 151.2 L160.0 213.1 L160.2 168.5 L160.5 196.9 L160.7 144.9 L161.0 174.9 L161.2 191.9 L161.5 198.0 L161.7 156.0 L162.0 167.4 L162.2 220.5 L162.5 181.3 L162.7 228.2 L163.0 210.6 L163.2 226.9 L163.5 227.8 L163.7 208.6 L164.0 217.4 L164.2 171.9 L164.5 163.8 L164.7 195.1 L165.0 221.6 L165.2 163.6 L165.5 248.9 L165.7 246.1 L166.0 165.9 L166.2 168.1 L166.5 158.5 L166.7 194.4 L167.0 225.9 L167.2 203.2 L167.5 170.7 L167.7 211.0 L168.0 209.0 L168.2 229.9 L168.5 222.9 L168.7 162.4 L169.0 174.1 L169.2 222.9 L169.5 220.4 L169.7 204.8 L170.0 171.3 L170.2 223.1 L170.5 192.9 L170.7 252.5 L171.0 225.8 L171.2 175.2 L171.5 160.8 L171.7 222.7 L172.0 211.2 L172.2 163.8 L172.5 199.6 L172.7 204.2 L173.0 172.2 L173.2 181.9 L173.5 154.3 L173.7 163.9 L174.0 205.2 L174.2 191.4 L174.5 189.6 L174.7 228.7 L175.0 217.2 L175.2 158.5 L175.4 235.7 L175.7 157.8 L175.9 179.2 L176.2 192.0 L176.4 171.6 L176.7 173.4 L176.9 151.3 L177.2 199.9 L177.4 194.7 L177.7 195.2 L177.9 144.9 L178.2 159.3 L178.4 215.6 L178.7 197.8 L178.9 209.0 L179.2 187.3 L179.4 181.3 L179.7 144.9 L179.9 242.7 L180.2 156.7 L180.4 174.6 L180.7 208.9 L180.9 192.2 L181.2 202.6 L181.4 186.2 L181.7 157.4 L181.9 233.4 L182.2 148.1 L182.4 198.9 L182.7 144.9 L182.9 175.2 L183.2 150.5 L183.4 170.6 L183.7 154.9 L183.9 185.9 L184.2 212.6 L184.4 167.3 L184.7 166.2 L184.9 144.9 L185.2 247.9 L185.4 193.5 L185.7 155.6 L185.9 225.3 L186.2 194.4 L186.4 144.9 L186.7 144.9 L186.9 214.0 L187.2 144.9 L187.4 151.9 L187.7 164.1 L187.9 176.0 L188.2 180.3 L188.4 213.6 L188.7 203.0 L188.9 165.4 L189.2 183.2 L189.4 144.9 L189.7 197.5 L189.9 259.6 L190.2 197.5 L190.4 179.0 L190.7 175.9 L190.9 185.3 L191.2 212.1 L191.4 144.9 L191.7 207.3 L191.9 166.0 L192.2 196.0 L192.4 223.3 L192.7 144.9 L192.9 262.8 L193.2 212.9 L193.4 174.3 L193.7 198.0 L193.9 164.7 L194.1 190.3 L194.4 200.9 L194.6 144.9 L194.9 193.8 L195.1 192.0 L195.4 219.8 L195.6 209.7 L195.9 167.7 L196.1 170.2 L196.4 187.1 L196.6 208.2 L196.9 166.5 L197.1 238.3 L197.4 197.4 L197.6 194.7 L197.9 212.5 L198.1 182.5 L198.4 207.1 L198.6 211.2 L198.9 144.9 L199.1 164.7 L199.4 151.0 L199.6 185.4 L199.9 158.0 L200.1 163.5 L200.4 150.5 L200.6 144.9 L200.9 193.7 L201.1 179.1 L201.4 188.4 L201.6 269.7 L201.9 228.8 L202.1 186.2 L202.4 167.7 L202.6 204.0 L202.9 152.6 L203.1 148.2 L203.4 199.1 L203.6 144.9 L203.9 144.9 L204.1 172.7 L204.4 216.1 L204.6 144.9 L204.9 191.5 L205.1 197.9 L205.4 183.1 L205.6 202.7 L205.9 154.4 L206.1 163.2 L206.4 149.9 L206.6 169.1 L206.9 210.4 L207.1 191.3 L207.4 160.2 L207.6 198.7 L207.9 144.9 L208.1 193.8 L208.4 204.1 L208.6 152.0 L208.9 164.0 L209.1 187.3 L209.4 193.4 L209.6 173.7 L209.9 161.4 L210.1 163.6 L210.4 195.6 L210.6 173.5 L210.9 161.2 L211.1 163.5 L211.4 269.7 L211.6 213.2 L211.9 209.8 L212.1 193.4 L212.4 181.1 L212.6 158.8 L212.9 168.0 L213.1 190.3 L213.3 185.8 L213.6 144.9 L213.8 204.9 L214.1 177.4 L214.3 144.9 L214.6 176.1 L214.8 247.9 L215.1 175.2 L215.3 198.1 L215.6 189.9 L215.8 154.9 L216.1 172.4 L216.3 194.4 L216.6 159.7 L216.8 173.4 L217.1 183.3 L217.3 177.5 L217.6 178.9 L217.8 196.7 L218.1 200.3 L218.3 185.7 L218.6 215.2 L218.8 224.3 L219.1 147.4 L219.3 193.7 L219.6 187.2 L219.8 190.6 L220.1 185.8 L220.3 185.8 L220.6 184.5 L220.8 210.7 L221.1 158.5 L221.3 207.3 L221.6 155.4 L221.8 244.1 L222.1 218.4 L222.3 156.7 L222.6 190.9 L222.8 206.7 L223.1 175.2 L223.3 217.9 L223.6 184.2 L223.8 253.0 L224.1 200.1 L224.3 206.0 L224.6 170.3 L224.8 160.2 L225.1 212.2 L225.3 144.9 L225.6 204.3 L225.8 248.2 L226.1 258.0 L226.3 144.9 L226.6 189.1 L226.8 205.9 L227.1 209.0 L227.3 219.3 L227.6 145.9 L227.8 189.0 L228.1 144.9 L228.3 192.5 L228.6 257.1 L228.8 161.1 L229.1 197.6 L229.3 193.6 L229.6 144.9 L229.8 194.4 L230.1 151.6 L230.3 186.6 L230.6 209.1 L230.8 171.3 L231.1 204.5 L231.3 149.6 L231.6 157.7 L231.8 184.6 L232.0 168.2 L232.3 169.5 L232.5 194.8 L232.8 159.6 L233.0 193.3 L233.3 168.0 L233.5 215.0 L233.8 183.4 L234.0 174.0 L234.3 210.2 L234.5 198.9 L234.8 202.4 L235.0 164.6 L235.3 208.0 L235.5 173.2 L235.8 144.9 L236.0 175.7 L236.3 234.8 L236.5 182.6 L236.8 155.1 L237.0 194.9 L237.3 153.0 L237.5 167.7 L237.8 173.6 L238.0 194.1 L238.3 201.7 L238.5 193.9 L238.8 184.4 L239.0 170.5 L239.3 173.6 L239.5 195.2 L239.8 184.2 L240.0 174.5 L240.3 235.0 L240.5 209.2 L240.8 210.1 L241.0 192.3 L241.3 194.4 L241.5 193.9 L241.8 212.3 L242.0 165.9 L242.3 177.7 L242.5 235.4 L242.8 185.7 L243.0 219.9 L243.3 144.9 L243.5 199.7 L243.8 197.9 L244.0 183.5 L244.3 192.0 L244.5 187.8 L244.8 144.9 L245.0 179.2 L245.3 160.9 L245.5 152.2 L245.8 215.3 L246.0 144.9 L246.3 165.3 L246.5 157.2 L246.8 211.9 L247.0 161.4 L247.3 173.6 L247.5 202.1 L247.8 144.9 L248.0 168.9 L248.3 193.1 L248.5 180.1 L248.8 158.6 L249.0 152.0 L249.3 168.5 L249.5 149.4 L249.8 144.9 L250.0 223.0 L250.3 200.5 L250.5 214.1 L250.7 183.0 L251.0 144.9 L251.2 166.3 L251.5 217.3 L251.7 194.7 L252.0 155.0 L252.2 201.9 L252.5 188.8 L252.7 176.8 L253.0 240.6 L253.2 162.5 L253.5 175.6 L253.7 168.8 L254.0 215.3 L254.2 209.0 L254.5 203.8 L254.7 178.4 L255.0 183.8 L255.2 182.1 L255.5 144.9 L255.7 146.7 L256.0 207.5 L256.2 205.5 L256.5 144.9 L256.7 195.4 L257.0 144.9 L257.2 144.9 L257.5 202.2 L257.7 194.0 L258.0 183.4 L258.2 211.8 L258.5 215.3 L258.7 197.9 L259.0 160.3 L259.2 199.3 L259.5 192.1 L259.7 199.9 L260.0 226.9 L260.2 144.9 L260.5 256.2 L260.7 205.5 L261.0 169.1 L261.2 227.8 L261.5 167.7 L261.7 148.3 L262.0 211.7 L262.2 179.6 L262.5 219.3 L262.7 170.7 L263.0 183.3 L263.2 179.4 L263.5 144.9 L263.7 171.8 L264.0 145.5 L264.2 166.9 L264.5 221.9 L264.7 178.1 L265.0 171.2 L265.2 229.3 L265.5 145.9 L265.7 183.9 L266.0 174.9 L266.2 212.8 L266.5 183.7 L266.7 176.9 L267.0 195.7 L267.2 183.5 L267.5 249.6 L267.7 145.0 L268.0 219.4 L268.2 251.5 L268.5 214.8 L268.7 211.0 L269.0 169.6 L269.2 213.4 L269.4 177.4 L269.7 214.8 L269.9 144.9 L270.2 169.6 L270.4 144.9 L270.7 216.4 L270.9 166.0 L271.2 214.7 L271.4 168.6 L271.7 165.6 L271.9 233.9 L272.2 220.1 L272.4 221.0 L272.7 231.2 L272.9 208.0 L273.2 214.9 L273.4 229.4 L273.7 183.1 L273.9 169.7 L274.2 225.5 L274.4 202.8 L274.7 185.8 L274.9 193.0 L275.2 207.1 L275.4 161.8 L275.7 160.7 L275.9 165.7 L276.2 192.4 L276.4 144.9 L276.7 144.9 L276.9 198.2 L277.2 189.8 L277.4 150.5 L277.7 210.2 L277.9 174.2 L278.2 184.8 L278.4 207.3 L278.7 193.1 L278.9 233.4 L279.2 202.5 L279.4 246.1 L279.7 144.9 L279.9 144.9 L280.2 149.3 L280.4 177.2 L280.7 156.2 L280.9 148.0 L281.2 155.7 L281.4 158.7 L281.7 213.7 L281.9 173.4 L282.2 202.3 L282.4 221.8 L282.7 220.6 L282.9 173.5 L283.2 154.7 L283.4 227.4 L283.7 144.9 L283.9 144.9 L284.2 197.8 L284.4 200.3 L284.7 188.6 L284.9 156.9 L285.2 197.9 L285.4 219.6 L285.7 176.1 L285.9 248.4 L286.2 182.2 L286.4 151.6 L286.7 177.3 L286.9 163.0 L287.2 171.6 L287.4 164.6 L287.7 182.1 L287.9 211.4 L288.1 193.2 L288.4 188.7 L288.6 148.7 L288.9 144.9 L289.1 173.9 L289.4 209.1 L289.6 208.4 L289.9 192.1 L290.1 144.9 L290.4 176.5 L290.6 188.2 L290.9 209.5 L291.1 160.0 L291.4 177.8 L291.6 188.0 L291.9 183.4 L292.1 144.9 L292.4 191.3 L292.6 144.9 L292.9 149.2 L293.1 184.9 L293.4 160.0 L293.6 190.2 L293.9 211.4 L294.1 194.5 L294.4 213.7 L294.6 171.1 L294.9 186.1 L295.1 169.4 L295.4 161.7 L295.6 269.7 L295.9 177.1 L296.1 240.6 L296.4 181.5 L296.6 212.8 L296.9 183.4 L297.1 145.5 L297.4 237.8 L297.6 180.8 L297.9 188.9 L298.1 243.3 L298.4 167.0 L298.6 185.5 L298.9 201.8 L299.1 208.2 L299.4 144.9 L299.6 198.3 L299.9 240.6 L300.1 214.5 L300.4 197.5 L300.6 198.0 L300.9 188.9 L301.1 217.9 L301.4 170.2 L301.6 201.0 L301.9 227.4 L302.1 211.0 L302.4 198.1 L302.6 161.0 L302.9 171.9 L303.1 196.7 L303.4 185.9 L303.6 180.0 L303.9 144.9 L304.1 205.0 L304.4 172.5 L304.6 164.7 L304.9 215.1 L305.1 180.8 L305.4 181.6 L305.6 200.6 L305.9 169.5 L306.1 155.6 L306.4 152.6 L306.6 192.3 L306.9 180.8 L307.1 144.9 L307.3 219.6 L307.6 179.8 L307.8 159.8 L308.1 182.0 L308.3 166.8 L308.6 181.3 L308.8 163.9 L309.1 148.0 L309.3 193.1 L309.6 180.6 L309.8 188.2 L310.1 198.6 L310.3 187.1 L310.6 220.5 L310.8 164.1 L311.1 144.9 L311.3 144.9 L311.6 148.2 L311.8 215.5 L312.1 144.9 L312.3 208.0 L312.6 188.1 L312.8 144.9 L313.1 218.7 L313.3 161.2 L313.6 178.1 L313.8 191.1 L314.1 212.8 L314.3 173.8 L314.6 200.4 L314.8 155.1 L315.1 149.7 L315.3 227.9 L315.6 201.7 L315.8 196.1 L316.1 222.0 L316.3 220.1 L316.6 183.8 L316.8 192.7 L317.1 236.1 L317.3 202.7 L317.6 170.9 L317.8 222.7 L318.1 214.2 L318.3 144.9 L318.6 146.9 L318.8 235.2 L319.1 227.1 L319.3 175.2 L319.6 222.3 L319.8 194.1 L320.1 200.1 L320.3 169.7 L320.6 262.4 L320.8 252.6 L321.1 223.3 L321.3 156.1 L321.6 191.1 L321.8 237.8 L322.1 171.7 L322.3 165.2 L322.6 193.9 L322.8 196.4 L323.1 173.4 L323.3 150.2 L323.6 181.9 L323.8 170.5 L324.1 187.9 L324.3 198.0 L324.6 214.0 L324.8 178.8 L325.1 195.5 L325.3 193.8 L325.6 158.6 L325.8 171.8 L326.0 160.4 L326.3 233.8 L326.5 169.7 L326.8 204.2 L327.0 210.8 L327.3 212.1 L327.5 150.1 L327.8 161.6 L328.0 208.0 L328.3 220.7 L328.5 186.1 L328.8 200.3 L329.0 144.9 L329.3 230.4 L329.5 241.5 L329.8 194.2 L330.0 186.2 L330.3 182.5 L330.5 163.9 L330.8 144.9 L331.0 196.8 L331.3 202.8 L331.5 239.3 L331.8 179.2 L332.0 160.9 L332.3 194.3 L332.5 151.0 L332.8 185.6 L333.0 144.9 L333.3 176.5 L333.5 218.2 L333.8 205.6 L334.0 232.6 L334.3 238.7 L334.5 178.5 L334.8 160.4 L335.0 144.9 L335.3 188.2 L335.5 193.6 L335.8 219.8 L336.0 156.9 L336.3 174.8 L336.5 204.4 L336.8 165.8 L337.0 169.6 L337.3 242.7 L337.5 164.2 L337.8 182.4 L338.0 198.3 L338.3 199.0 L338.5 144.9 L338.8 144.9 L339.0 144.9 L339.3 221.0 L339.5 206.2 L339.8 159.3 L340.0 222.8 L340.3 208.1 L340.5 240.7 L340.8 144.9 L341.0 154.6 L341.3 172.7 L341.5 179.9 L341.8 199.0 L342.0 198.4 L342.3 168.0 L342.5 207.9 L342.8 149.6 L343.0 201.3 L343.3 212.7 L343.5 147.5 L343.8 190.8 L344.0 169.8 L344.3 199.0 L344.5 254.1" fill="none" stroke="#1e9b60" stroke-opacity="0.055" stroke-width="1"/><path d="M62.5 302.0 L62.7 154.2 L63.0 186.5 L63.2 218.8 L63.5 209.6 L63.7 221.1 L64.0 214.2 L64.2 225.8 L64.5 186.1 L64.7 251.2 L65.0 198.1 L65.2 174.9 L65.5 194.7 L65.7 189.1 L66.0 188.8 L66.2 186.5 L66.5 210.1 L66.7 188.3 L67.0 201.1 L67.2 169.4 L67.5 172.0 L67.7 165.7 L68.0 176.3 L68.2 191.0 L68.5 174.6 L68.7 187.9 L69.0 178.5 L69.2 195.5 L69.5 192.0 L69.7 180.0 L70.0 165.4 L70.2 194.9 L70.5 160.1 L70.7 153.7 L71.0 199.0 L71.2 184.6 L71.5 194.5 L71.7 184.6 L72.0 188.7 L72.2 181.6 L72.5 170.6 L72.7 170.7 L73.0 177.9 L73.2 180.2 L73.5 178.8 L73.7 179.8 L74.0 175.2 L74.2 180.8 L74.5 176.3 L74.7 197.1 L75.0 173.6 L75.2 161.4 L75.5 178.0 L75.7 197.3 L76.0 165.0 L76.2 184.1 L76.5 214.5 L76.7 182.9 L77.0 172.2 L77.2 174.0 L77.5 164.0 L77.7 172.2 L78.0 177.8 L78.2 202.6 L78.5 192.9 L78.7 177.7 L79.0 171.0 L79.2 191.0 L79.5 187.2 L79.7 175.6 L80.0 202.5 L80.2 203.5 L80.5 184.5 L80.7 178.6 L81.0 187.0 L81.2 206.9 L81.4 180.2 L81.7 196.3 L81.9 173.0 L82.2 180.8 L82.4 176.4 L82.7 172.9 L82.9 186.8 L83.2 169.6 L83.4 164.1 L83.7 174.2 L83.9 162.6 L84.2 185.2 L84.4 169.1 L84.7 176.9 L84.9 191.4 L85.2 179.5 L85.4 184.6 L85.7 184.9 L85.9 177.7 L86.2 166.3 L86.4 183.1 L86.7 178.0 L86.9 195.4 L87.2 178.3 L87.4 166.6 L87.7 169.7 L87.9 172.6 L88.2 184.3 L88.4 189.6 L88.7 179.6 L88.9 193.6 L89.2 192.2 L89.4 167.8 L89.7 189.4 L89.9 158.5 L90.2 194.7 L90.4 174.1 L90.7 193.1 L90.9 179.1 L91.2 192.3 L91.4 180.3 L91.7 182.7 L91.9 184.8 L92.2 173.5 L92.4 162.5 L92.7 185.8 L92.9 169.4 L93.2 178.5 L93.4 179.0 L93.7 154.9 L93.9 204.7 L94.2 202.9 L94.4 201.0 L94.7 183.5 L94.9 182.1 L95.2 146.1 L95.4 177.9 L95.7 161.7 L95.9 167.9 L96.2 186.5 L96.4 176.7 L96.7 163.8 L96.9 180.4 L97.2 180.2 L97.4 176.7 L97.7 199.5 L97.9 191.2 L98.2 178.5 L98.4 175.4 L98.7 192.5 L98.9 185.4 L99.2 182.8 L99.4 184.7 L99.7 174.6 L99.9 180.6 L100.1 180.8 L100.4 198.3 L100.6 194.5 L100.9 179.8 L101.1 200.8 L101.4 180.1 L101.6 191.0 L101.9 193.4 L102.1 176.3 L102.4 191.4 L102.6 193.2 L102.9 190.6 L103.1 183.0 L103.4 151.7 L103.6 208.2 L103.9 184.1 L104.1 187.1 L104.4 173.1 L104.6 188.7 L104.9 212.9 L105.1 169.9 L105.4 197.2 L105.6 185.4 L105.9 201.1 L106.1 198.4 L106.4 192.0 L106.6 175.9 L106.9 175.4 L107.1 193.1 L107.4 180.5 L107.6 190.1 L107.9 184.4 L108.1 183.2 L108.4 177.2 L108.6 190.8 L108.9 184.8 L109.1 180.3 L109.4 181.1 L109.6 191.0 L109.9 161.3 L110.1 186.1 L110.4 172.2 L110.6 177.8 L110.9 166.1 L111.1 205.0 L111.4 156.3 L111.6 182.4 L111.9 214.7 L112.1 178.9 L112.4 154.6 L112.6 174.5 L112.9 194.1 L113.1 184.4 L113.4 181.8 L113.6 194.6 L113.9 180.9 L114.1 182.9 L114.4 154.4 L114.6 183.4 L114.9 165.3 L115.1 188.7 L115.4 190.2 L115.6 170.1 L115.9 174.7 L116.1 202.4 L116.4 175.8 L116.6 176.8 L116.9 212.7 L117.1 180.9 L117.4 181.4 L117.6 189.9 L117.9 191.4 L118.1 191.6 L118.4 187.3 L118.6 199.2 L118.9 183.9 L119.1 200.1 L119.3 181.7 L119.6 182.8 L119.8 193.7 L120.1 171.9 L120.3 160.1 L120.6 168.0 L120.8 198.8 L121.1 168.5 L121.3 180.0 L121.6 183.1 L121.8 190.0 L122.1 182.6 L122.3 166.9 L122.6 176.6 L122.8 187.3 L123.1 190.9 L123.3 187.9 L123.6 177.1 L123.8 162.7 L124.1 195.7 L124.3 184.6 L124.6 190.6 L124.8 194.8 L125.1 181.8 L125.3 179.6 L125.6 203.2 L125.8 197.5 L126.1 172.4 L126.3 182.9 L126.6 179.3 L126.8 191.2 L127.1 190.0 L127.3 179.9 L127.6 191.0 L127.8 197.7 L128.1 184.7 L128.3 175.1 L128.6 196.6 L128.8 172.7 L129.1 176.9 L129.3 194.5 L129.6 183.7 L129.8 184.2 L130.1 176.5 L130.3 176.4 L130.6 198.1 L130.8 199.3 L131.1 170.8 L131.3 180.4 L131.6 176.3 L131.8 175.4 L132.1 160.7 L132.3 191.8 L132.6 164.8 L132.8 186.7 L133.1 167.8 L133.3 161.0 L133.6 191.7 L133.8 170.1 L134.1 178.2 L134.3 179.1 L134.6 174.6 L134.8 187.5 L135.1 186.3 L135.3 168.0 L135.6 165.4 L135.8 180.8 L136.1 191.7 L136.3 148.5 L136.6 161.6 L136.8 170.0 L137.1 186.5 L137.3 181.4 L137.6 172.3 L137.8 186.2 L138.0 156.5 L138.3 171.6 L138.5 168.5 L138.8 184.6 L139.0 183.1 L139.3 181.9 L139.5 170.1 L139.8 176.3 L140.0 237.3 L140.3 170.2 L140.5 172.2 L140.8 158.9 L141.0 178.6 L141.3 189.3 L141.5 178.0 L141.8 160.8 L142.0 184.3 L142.3 177.4 L142.5 181.9 L142.8 186.0 L143.0 175.9 L143.3 189.1 L143.5 183.2 L143.8 171.0 L144.0 168.8 L144.3 171.3 L144.5 171.6 L144.8 184.3 L145.0 184.6 L145.3 169.3 L145.5 192.8 L145.8 180.6 L146.0 200.5 L146.3 183.9 L146.5 188.4 L146.8 194.5 L147.0 174.3 L147.3 190.1 L147.5 197.3 L147.8 184.3 L148.0 189.8 L148.3 165.0 L148.5 187.0 L148.8 178.5 L149.0 195.9 L149.3 186.6 L149.5 185.5 L149.8 186.1 L150.0 189.9 L150.3 181.3 L150.5 164.2 L150.8 182.2 L151.0 180.4 L151.3 182.1 L151.5 149.6 L151.8 159.8 L152.0 172.0 L152.3 172.0 L152.5 188.0 L152.8 181.7 L153.0 178.2 L153.3 179.2 L153.5 191.5 L153.8 191.5 L154.0 176.7 L154.3 179.5 L154.5 206.1 L154.8 179.7 L155.0 166.0 L155.3 189.0 L155.5 178.8 L155.8 198.1 L156.0 172.4 L156.3 194.5 L156.5 195.8 L156.7 184.8 L157.0 154.4 L157.2 187.5 L157.5 195.4 L157.7 175.5 L158.0 179.6 L158.2 164.0 L158.5 198.2 L158.7 202.4 L159.0 200.5 L159.2 180.7 L159.5 180.1 L159.7 170.8 L160.0 199.7 L160.2 191.9 L160.5 184.2 L160.7 173.5 L161.0 177.4 L161.2 186.4 L161.5 192.7 L161.7 170.8 L162.0 192.3 L162.2 151.6 L162.5 183.4 L162.7 163.8 L163.0 195.9 L163.2 188.4 L163.5 189.4 L163.7 188.0 L164.0 192.5 L164.2 189.3 L164.5 183.3 L164.7 187.9 L165.0 175.3 L165.2 184.4 L165.5 183.8 L165.7 167.4 L166.0 180.5 L166.2 182.0 L166.5 183.5 L166.7 181.8 L167.0 175.8 L167.2 191.3 L167.5 169.9 L167.7 166.4 L168.0 171.4 L168.2 190.3 L168.5 203.1 L168.7 190.9 L169.0 183.7 L169.2 176.2 L169.5 187.7 L169.7 189.3 L170.0 169.3 L170.2 192.5 L170.5 172.5 L170.7 173.6 L171.0 208.7 L171.2 181.0 L171.5 190.3 L171.7 193.4 L172.0 203.5 L172.2 200.8 L172.5 177.4 L172.7 186.5 L173.0 179.0 L173.2 194.0 L173.5 184.9 L173.7 183.8 L174.0 197.9 L174.2 199.7 L174.5 175.7 L174.7 179.8 L175.0 191.5 L175.2 182.4 L175.4 172.9 L175.7 159.4 L175.9 189.4 L176.2 172.0 L176.4 155.8 L176.7 178.9 L176.9 163.8 L177.2 209.1 L177.4 164.3 L177.7 180.2 L177.9 201.6 L178.2 171.9 L178.4 166.7 L178.7 164.8 L178.9 165.4 L179.2 180.4 L179.4 189.3 L179.7 185.5 L179.9 180.9 L180.2 175.8 L180.4 184.9 L180.7 178.3 L180.9 169.2 L181.2 175.9 L181.4 153.6 L181.7 154.6 L181.9 202.3 L182.2 185.9 L182.4 195.0 L182.7 192.1 L182.9 174.0 L183.2 191.2 L183.4 192.2 L183.7 182.9 L183.9 170.8 L184.2 184.4 L184.4 183.0 L184.7 168.9 L184.9 174.4 L185.2 174.3 L185.4 168.3 L185.7 190.2 L185.9 176.9 L186.2 187.5 L186.4 168.8 L186.7 170.9 L186.9 190.5 L187.2 178.0 L187.4 191.5 L187.7 164.3 L187.9 175.4 L188.2 187.9 L188.4 190.9 L188.7 182.4 L188.9 179.1 L189.2 186.8 L189.4 172.4 L189.7 195.5 L189.9 178.8 L190.2 178.6 L190.4 199.6 L190.7 175.7 L190.9 193.3 L191.2 208.6 L191.4 188.2 L191.7 183.6 L191.9 171.6 L192.2 187.6 L192.4 165.6 L192.7 165.9 L192.9 170.4 L193.2 168.4 L193.4 179.8 L193.7 189.1 L193.9 174.8 L194.1 170.8 L194.4 179.5 L194.6 186.8 L194.9 202.2 L195.1 177.4 L195.4 180.9 L195.6 200.5 L195.9 183.9 L196.1 176.0 L196.4 186.2 L196.6 176.2 L196.9 176.5 L197.1 201.7 L197.4 207.5 L197.6 180.1 L197.9 175.6 L198.1 169.7 L198.4 207.9 L198.6 186.6 L198.9 176.0 L199.1 170.5 L199.4 164.1 L199.6 193.5 L199.9 187.2 L200.1 195.1 L200.4 173.1 L200.6 197.3 L200.9 190.9 L201.1 172.1 L201.4 176.8 L201.6 208.2 L201.9 191.2 L202.1 173.4 L202.4 197.7 L202.6 184.3 L202.9 183.0 L203.1 170.5 L203.4 177.8 L203.6 178.4 L203.9 185.6 L204.1 181.2 L204.4 182.3 L204.6 172.0 L204.9 182.1 L205.1 167.8 L205.4 197.9 L205.6 164.5 L205.9 179.6 L206.1 164.2 L206.4 175.7 L206.6 166.7 L206.9 159.6 L207.1 183.2 L207.4 175.5 L207.6 178.6 L207.9 174.6 L208.1 196.1 L208.4 179.6 L208.6 180.2 L208.9 188.0 L209.1 179.9 L209.4 195.7 L209.6 162.0 L209.9 172.8 L210.1 171.9 L210.4 187.4 L210.6 191.4 L210.9 175.2 L211.1 196.5 L211.4 175.1 L211.6 184.5 L211.9 180.4 L212.1 173.9 L212.4 177.6 L212.6 156.8 L212.9 170.9 L213.1 193.0 L213.3 167.2 L213.6 193.2 L213.8 177.9 L214.1 192.3 L214.3 187.9 L214.6 164.5 L214.8 186.1 L215.1 187.1 L215.3 186.1 L215.6 182.9 L215.8 162.5 L216.1 212.0 L216.3 193.1 L216.6 173.0 L216.8 197.3 L217.1 183.0 L217.3 165.9 L217.6 178.9 L217.8 184.2 L218.1 186.6 L218.3 188.2 L218.6 186.1 L218.8 178.4 L219.1 166.2 L219.3 169.0 L219.6 186.9 L219.8 187.9 L220.1 171.5 L220.3 200.8 L220.6 185.8 L220.8 185.0 L221.1 195.1 L221.3 193.6 L221.6 179.1 L221.8 201.3 L222.1 192.0 L222.3 189.1 L222.6 180.9 L222.8 198.2 L223.1 169.6 L223.3 184.6 L223.6 183.7 L223.8 184.5 L224.1 188.5 L224.3 192.3 L224.6 167.4 L224.8 178.9 L225.1 182.0 L225.3 168.9 L225.6 189.3 L225.8 175.4 L226.1 181.6 L226.3 191.5 L226.6 173.1 L226.8 199.3 L227.1 174.1 L227.3 191.7 L227.6 177.3 L227.8 166.1 L228.1 174.0 L228.3 187.5 L228.6 179.7 L228.8 184.0 L229.1 193.2 L229.3 192.9 L229.6 179.7 L229.8 174.6 L230.1 200.5 L230.3 181.4 L230.6 175.4 L230.8 180.2 L231.1 193.2 L231.3 189.1 L231.6 195.6 L231.8 173.7 L232.0 164.0 L232.3 205.3 L232.5 180.3 L232.8 180.6 L233.0 180.7 L233.3 191.3 L233.5 185.2 L233.8 197.9 L234.0 180.3 L234.3 194.2 L234.5 189.6 L234.8 192.5 L235.0 187.1 L235.3 181.3 L235.5 181.3 L235.8 183.6 L236.0 182.8 L236.3 198.2 L236.5 215.1 L236.8 177.7 L237.0 168.5 L237.3 200.1 L237.5 192.2 L237.8 179.8 L238.0 171.4 L238.3 175.3 L238.5 167.2 L238.8 195.7 L239.0 176.9 L239.3 176.6 L239.5 186.6 L239.8 167.7 L240.0 174.2 L240.3 169.8 L240.5 185.9 L240.8 169.8 L241.0 193.4 L241.3 177.0 L241.5 211.2 L241.8 192.5 L242.0 173.1 L242.3 186.3 L242.5 179.7 L242.8 200.3 L243.0 164.2 L243.3 174.1 L243.5 180.8 L243.8 176.3 L244.0 176.4 L244.3 163.7 L244.5 177.5 L244.8 196.9 L245.0 182.9 L245.3 166.7 L245.5 175.4 L245.8 186.4 L246.0 175.3 L246.3 181.8 L246.5 175.7 L246.8 202.4 L247.0 195.6 L247.3 177.8 L247.5 188.1 L247.8 182.1 L248.0 163.9 L248.3 189.3 L248.5 184.1 L248.8 193.1 L249.0 194.0 L249.3 189.0 L249.5 204.9 L249.8 212.5 L250.0 173.0 L250.3 189.4 L250.5 174.7 L250.7 186.0 L251.0 185.5 L251.2 179.3 L251.5 178.5 L251.7 200.6 L252.0 173.7 L252.2 196.9 L252.5 184.2 L252.7 157.2 L253.0 184.9 L253.2 167.0 L253.5 190.3 L253.7 179.2 L254.0 185.8 L254.2 181.5 L254.5 194.6 L254.7 195.5 L255.0 180.9 L255.2 201.5 L255.5 193.4 L255.7 176.7 L256.0 190.6 L256.2 193.7 L256.5 195.9 L256.7 181.1 L257.0 186.6 L257.2 181.4 L257.5 185.8 L257.7 163.0 L258.0 189.4 L258.2 228.0 L258.5 183.1 L258.7 184.3 L259.0 183.4 L259.2 204.1 L259.5 173.3 L259.7 187.6 L260.0 187.6 L260.2 205.9 L260.5 182.7 L260.7 189.3 L261.0 173.7 L261.2 213.0 L261.5 201.4 L261.7 185.7 L262.0 197.1 L262.2 182.3 L262.5 198.2 L262.7 188.7 L263.0 189.7 L263.2 187.8 L263.5 193.3 L263.7 196.2 L264.0 188.5 L264.2 194.8 L264.5 186.0 L264.7 190.2 L265.0 211.5 L265.2 186.9 L265.5 170.0 L265.7 182.9 L266.0 179.3 L266.2 180.6 L266.5 190.3 L266.7 199.2 L267.0 174.9 L267.2 172.2 L267.5 177.5 L267.7 178.5 L268.0 179.8 L268.2 184.0 L268.5 180.6 L268.7 183.7 L269.0 179.5 L269.2 193.1 L269.4 189.9 L269.7 176.5 L269.9 186.8 L270.2 209.2 L270.4 180.0 L270.7 207.2 L270.9 159.5 L271.2 173.8 L271.4 173.6 L271.7 188.9 L271.9 194.5 L272.2 184.4 L272.4 182.5 L272.7 191.6 L272.9 181.9 L273.2 175.9 L273.4 176.4 L273.7 196.1 L273.9 208.2 L274.2 183.8 L274.4 191.6 L274.7 179.6 L274.9 165.5 L275.2 165.7 L275.4 180.3 L275.7 171.1 L275.9 164.6 L276.2 183.0 L276.4 181.7 L276.7 175.7 L276.9 187.7 L277.2 189.6 L277.4 194.0 L277.7 185.4 L277.9 192.5 L278.2 176.9 L278.4 189.3 L278.7 169.8 L278.9 171.8 L279.2 198.4 L279.4 171.7 L279.7 188.4 L279.9 169.2 L280.2 178.4 L280.4 184.8 L280.7 176.6 L280.9 190.2 L281.2 179.7 L281.4 179.1 L281.7 184.9 L281.9 178.4 L282.2 193.5 L282.4 177.2 L282.7 195.9 L282.9 175.0 L283.2 177.3 L283.4 175.1 L283.7 188.7 L283.9 149.5 L284.2 185.4 L284.4 182.1 L284.7 193.1 L284.9 167.9 L285.2 189.2 L285.4 172.5 L285.7 192.3 L285.9 179.2 L286.2 185.5 L286.4 171.5 L286.7 184.9 L286.9 192.3 L287.2 177.1 L287.4 194.7 L287.7 192.1 L287.9 173.5 L288.1 202.7 L288.4 174.6 L288.6 186.6 L288.9 191.9 L289.1 179.7 L289.4 175.9 L289.6 188.8 L289.9 184.6 L290.1 174.5 L290.4 174.8 L290.6 182.1 L290.9 189.2 L291.1 192.2 L291.4 187.3 L291.6 174.4 L291.9 175.5 L292.1 177.0 L292.4 164.8 L292.6 183.8 L292.9 186.1 L293.1 186.8 L293.4 161.6 L293.6 205.7 L293.9 180.4 L294.1 178.7 L294.4 183.3 L294.6 158.9 L294.9 171.7 L295.1 176.5 L295.4 195.2 L295.6 179.8 L295.9 189.4 L296.1 184.9 L296.4 183.8 L296.6 190.6 L296.9 178.0 L297.1 167.5 L297.4 174.1 L297.6 183.3 L297.9 206.9 L298.1 173.7 L298.4 174.5 L298.6 188.3 L298.9 191.6 L299.1 178.0 L299.4 193.9 L299.6 177.1 L299.9 198.6 L300.1 196.4 L300.4 185.0 L300.6 200.6 L300.9 184.8 L301.1 178.9 L301.4 199.0 L301.6 173.8 L301.9 188.9 L302.1 177.5 L302.4 180.7 L302.6 187.1 L302.9 187.5 L303.1 201.1 L303.4 189.5 L303.6 190.4 L303.9 163.6 L304.1 170.9 L304.4 196.9 L304.6 173.2 L304.9 179.1 L305.1 185.5 L305.4 177.0 L305.6 175.1 L305.9 188.7 L306.1 185.6 L306.4 181.0 L306.6 193.9 L306.9 180.3 L307.1 183.1 L307.3 189.0 L307.6 190.2 L307.8 178.2 L308.1 173.0 L308.3 178.1 L308.6 190.5 L308.8 172.5 L309.1 178.7 L309.3 174.0 L309.6 167.4 L309.8 190.5 L310.1 182.3 L310.3 186.9 L310.6 189.0 L310.8 158.1 L311.1 170.1 L311.3 223.1 L311.6 176.2 L311.8 185.9 L312.1 167.5 L312.3 178.3 L312.6 180.0 L312.8 176.7 L313.1 174.0 L313.3 178.8 L313.6 180.4 L313.8 179.4 L314.1 172.3 L314.3 191.5 L314.6 179.5 L314.8 180.1 L315.1 184.6 L315.3 171.6 L315.6 193.0 L315.8 184.3 L316.1 189.8 L316.3 175.3 L316.6 187.1 L316.8 182.2 L317.1 178.5 L317.3 199.5 L317.6 177.8 L317.8 190.7 L318.1 185.6 L318.3 184.4 L318.6 174.5 L318.8 174.6 L319.1 163.3 L319.3 180.4 L319.6 187.7 L319.8 187.7 L320.1 175.5 L320.3 164.9 L320.6 178.1 L320.8 187.1 L321.1 177.7 L321.3 178.5 L321.6 180.4 L321.8 188.0 L322.1 207.4 L322.3 185.8 L322.6 168.1 L322.8 177.4 L323.1 204.0 L323.3 179.4 L323.6 200.1 L323.8 158.5 L324.1 177.6 L324.3 192.2 L324.6 170.6 L324.8 186.7 L325.1 172.1 L325.3 178.2 L325.6 190.5 L325.8 170.4 L326.0 191.9 L326.3 163.8 L326.5 177.7 L326.8 189.9 L327.0 197.8 L327.3 161.2 L327.5 163.4 L327.8 192.9 L328.0 162.2 L328.3 178.3 L328.5 183.3 L328.8 180.6 L329.0 183.2 L329.3 165.0 L329.5 179.2 L329.8 200.6 L330.0 159.1 L330.3 171.3 L330.5 191.8 L330.8 184.0 L331.0 189.0 L331.3 180.1 L331.5 176.5 L331.8 179.0 L332.0 188.1 L332.3 191.1 L332.5 173.7 L332.8 183.3 L333.0 158.6 L333.3 191.5 L333.5 174.3 L333.8 182.3 L334.0 191.6 L334.3 167.9 L334.5 181.8 L334.8 192.7 L335.0 186.6 L335.3 171.5 L335.5 195.1 L335.8 167.3 L336.0 175.7 L336.3 187.1 L336.5 168.5 L336.8 164.2 L337.0 175.8 L337.3 181.3 L337.5 163.5 L337.8 167.5 L338.0 209.5 L338.3 186.5 L338.5 190.4 L338.8 188.1 L339.0 200.0 L339.3 173.1 L339.5 182.1 L339.8 183.1 L340.0 168.6 L340.3 190.7 L340.5 185.7 L340.8 181.7 L341.0 189.3 L341.3 185.2 L341.5 175.6 L341.8 206.0 L342.0 170.1 L342.3 192.8 L342.5 182.2 L342.8 200.2 L343.0 186.2 L343.3 192.4 L343.5 169.2 L343.8 175.7 L344.0 178.8 L344.3 164.1 L344.5 168.8" fill="none" stroke="#1e9b60" stroke-width="1.15"/></svg>
<div style="position:absolute;left:1361px;top:132px;width:376px;height:359px;border:1px solid #cfcfcf;border-radius:3px;box-sizing:border-box;background:#fff;box-shadow:0 1px 1px rgba(0,0,0,0.04)"></div>
<div style="position:absolute;left:1362px;top:133px;width:374px;height:26px;background:#f7f7f7"></div>
<div class="t" style="left:1369px;top:140px;font-size:11px;color:#2b2b2b;font-weight:700;transform:scaleX(0.8976);">GPU Memory</div>
<svg style="position:absolute;left:1718px;top:140px;" width="12" height="11" viewBox="0 0 12 11"><path d="M5.5 0.5 L5.5 7 M2 4 L5.5 7.5 L9 4" fill="none" stroke="#0b5cb5" stroke-width="1.6"/><rect x="0" y="9" width="11.5" height="1.6" fill="#0b5cb5"/></svg>
<div class="t r" style="left:1418px;top:166px;font-size:9.5px;color:#555;transform:scaleX(0.9271);">x-axis</div>
<div class="t r" style="left:1524px;top:166px;font-size:9.5px;color:#555;transform:scaleX(0.9271);">y-axis</div>
<div style="position:absolute;left:1418px;top:179px;width:100px;height:18px;background:#f1f1f1;border-radius:3px"></div>
<div style="position:absolute;left:1524px;top:179px;width:100px;height:18px;background:#f1f1f1;border-radius:3px"></div>
<div class="t" style="left:1451px;top:183px;font-size:11.7px;color:#1c62b0;font-weight:700;transform:scaleX(0.8282);">Step</div>
<div class="t" style="left:1553px;top:183px;font-size:11.7px;color:#1c62b0;font-weight:700;transform:scaleX(0.8544);">Linear</div>
<svg style="position:absolute;left:1498px;top:187px;" width="8" height="5" viewBox="0 0 8 5"><path d="M0 0 L7 0 L3.5 4 Z" fill="#0b5cb5"/></svg>
<svg style="position:absolute;left:1604px;top:187px;" width="8" height="5" viewBox="0 0 8 5"><path d="M0 0 L7 0 L3.5 4 Z" fill="#0b5cb5"/></svg>
<svg style="position:absolute;left:1714px;top:180px;" width="14" height="15" viewBox="0 0 14 15"><path d="M3.2 4.2 A5.2 5.2 0 1 1 2.3 9.5" fill="none" stroke="#5b9bd5" stroke-width="1.7"/><path d="M0.8 1.8 L1.3 6.5 L5.8 5.6 Z" fill="#5b9bd5"/></svg>
<div style="position:absolute;left:1713px;top:204px;width:15px;height:12px;background:#ececec"></div>
<svg style="position:absolute;left:1713px;top:204px;" width="15" height="12" viewBox="0 0 15 12"><path d="M2 9.8 C4.5 5.5 7.2 2.9 10 2.9 C11.2 2.9 11.9 3.5 12.4 4.6" fill="none" stroke="#777" stroke-width="0.9"/></svg>
<div style="position:absolute;left:1719px;top:231px;width:2px;height:214px;background:#dadada"></div>
<div style="position:absolute;left:1714px;top:439px;width:12px;height:12px;border-radius:50%;background:#8aa3ae;border:0.8px solid #e8f4f8;box-sizing:border-box;box-shadow:1px 1px 2px rgba(0,0,0,0.3)"></div>
<div style="position:absolute;left:1713px;top:461px;width:15px;height:12px;background:#ececec"></div>
<svg style="position:absolute;left:1713px;top:461px;" width="15" height="12" viewBox="0 0 15 12"><path d="M1.5 10 L4.2 7 L6.5 9.8 L9.5 2.8 L12 6" fill="none" stroke="#666" stroke-width="0.9"/></svg>
<div class="t r" style="left:1399.5px;top:403px;font-size:11px;color:#3a3a3a;transform:scaleX(0.8378);">2 GB</div>
<div class="t r" style="left:1399.5px;top:374px;font-size:11px;color:#3a3a3a;transform:scaleX(0.8378);">4 GB</div>
<div class="t r" style="left:1399.5px;top:345px;font-size:11px;color:#3a3a3a;transform:scaleX(0.8378);">6 GB</div>
<div class="t r" style="left:1399.5px;top:316px;font-size:11px;color:#3a3a3a;transform:scaleX(0.8378);">8 GB</div>
<div class="t r" style="left:1394.5px;top:287px;font-size:11px;color:#3a3a3a;transform:scaleX(0.8337);">10 GB</div>
<div class="t r" style="left:1394.5px;top:258px;font-size:11px;color:#3a3a3a;transform:scaleX(0.8337);">12 GB</div>
<div class="t r" style="left:1394.5px;top:229px;font-size:11px;color:#3a3a3a;transform:scaleX(0.8337);">14 GB</div>
<div class="t r" style="left:1398.5px;top:425.5px;font-size:11px;color:#3a3a3a;transform:scaleX(0.8776);">0 GB</div>
<div class="t r" style="left:1414.0px;top:440px;font-size:11px;color:#3a3a3a;transform:scaleX(0.8875);">0.00</div>
<div class="t r" style="left:1484.65px;top:440px;font-size:11px;color:#3a3a3a;transform:scaleX(0.8860);">1.00e+3</div>
<div class="t r" style="left:1563.55px;top:440px;font-size:11px;color:#3a3a3a;transform:scaleX(0.8860);">2.00e+3</div>
<div class="t r" style="left:1642.45px;top:440px;font-size:11px;color:#3a3a3a;transform:scaleX(0.8860);">3.00e+3</div>
<svg style="position:absolute;left:1418px;top:460px;" width="14" height="10" viewBox="0 0 14 10"><path d="M1 5 L13 5" stroke="#c9a227" stroke-width="1.5"/><circle cx="7" cy="5" r="3.2" fill="#c9a227"/></svg>
<div class="t r" style="left:1438px;top:460px;font-size:11px;color:#1c62b0;transform:scaleX(0.9813);">gpu_memory</div>
<svg style="position:absolute;left:1361px;top:132px" width="376" height="359" viewBox="0 0 376 359"><rect x="140.5" y="71" width="1" height="231" fill="#e3e3e3"/><rect x="219.4" y="71" width="1" height="231" fill="#e3e3e3"/><rect x="298.3" y="71" width="1" height="231" fill="#e3e3e3"/><rect x="62" y="273.0" width="283" height="1" fill="#e3e3e3"/><rect x="62" y="244.1" width="283" height="1" fill="#e3e3e3"/><rect x="62" y="215.1" width="283" height="1" fill="#e3e3e3"/><rect x="62" y="186.2" width="283" height="1" fill="#e3e3e3"/><rect x="62" y="157.2" width="283" height="1" fill="#e3e3e3"/><rect x="62" y="128.2" width="283" height="1" fill="#e3e3e3"/><rect x="62" y="99.3" width="283" height="1" fill="#e3e3e3"/><rect x="62" y="71" width="1" height="232" fill="#cfcfcf"/><rect x="62" y="302" width="283" height="1" fill="#cfcfcf"/><path d="M62.0 283.9 L62.0 257.1 L345.0 247.0" fill="none" stroke="#c9a227" stroke-width="1.2"/></svg>
<div style="position:absolute;left:765px;top:299px;width:160px;height:70px;background:#f7f7f7;border:1px solid #999;box-sizing:border-box"></div>
<div class="t r" style="left:771px;top:310px;font-size:9.5px;color:#555;transform:scaleX(0.9325);">Value</div>
<div class="t r" style="left:888px;top:310px;font-size:9.5px;color:#555;transform:scaleX(0.9210);">Step</div>
<svg style="position:absolute;left:771px;top:325px;" width="10" height="7" viewBox="0 0 10 7"><path d="M0.5 3.5 L9.5 3.5" stroke="#3797e0" stroke-width="1.4"/><circle cx="5" cy="3.5" r="2.6" fill="#3797e0"/></svg>
<div class="t" style="left:786px;top:325px;font-size:10.5px;color:#333;font-family:'Liberation Mono',monospace;transform:scaleX(0.9149);">3.029963493347168</div>
<div class="t" style="left:786px;top:337px;font-size:10.5px;color:#333;font-family:'Liberation Mono',monospace;transform:scaleX(0.8729);">GB</div>
<div class="t" style="left:887px;top:333px;font-size:10.5px;color:#333;font-family:'Liberation Mono',monospace;transform:scaleX(0.9126);">1373</div>
<div class="t" style="left:769px;top:354px;font-size:9px;color:#555;font-style:italic;font-family:'Liberation Sans',sans-serif;transform:scaleX(0.9689);">Zoom in: select area</div>
<svg style="position:absolute;left:752px;top:297px;" width="14" height="20" viewBox="0 0 14 20"><path d="M1 1 L1 15 L4.5 11.5 L7 17.5 L9 16.6 L6.6 10.8 L11.5 10.8 Z" fill="#fff" stroke="#111" stroke-width="1"/></svg>
<div style="position:absolute;left:195px;top:511px;width:764px;height:360px;border:1px solid #cfcfcf;border-radius:3px;box-sizing:border-box;background:#fff"></div>
<div style="position:absolute;left:196px;top:512px;width:762px;height:26px;background:#f7f7f7"></div>
<div class="t" style="left:203px;top:519px;font-size:11px;color:#2b2b2b;font-weight:700;transform:scaleX(0.9382);">monitoring/stderr</div>
<svg style="position:absolute;left:941px;top:519px;" width="12" height="11" viewBox="0 0 12 11"><path d="M5.5 0.5 L5.5 7 M2 4 L5.5 7.5 L9 4" fill="none" stroke="#0b5cb5" stroke-width="1.6"/><rect x="0" y="9" width="11.5" height="1.6" fill="#0b5cb5"/></svg>
<div style="position:absolute;left:954px;top:538px;width:4px;height:332px;background:#cfdde5"></div>
<div style="position:absolute;left:954px;top:853px;width:4px;height:17px;background:#1589aa"></div>
<div style="position:absolute;left:209px;top:537px;font-family:'Liberation Mono',monospace;font-size:12px;letter-spacing:-0.5px;line-height:16px;color:#2f2f2f;white-space:pre">2022/07/06 20:47:25  Training: 56%|       | 1098/1947 [03:43&lt;02:49, 5.01it/s]<br>2022/07/06 20:47:25  Training: 56%|       | 1099/1947 [03:43&lt;02:49, 5.00it/s]<br>2022/07/06 20:47:25  Training: 56%|       | 1100/1947 [03:43&lt;02:51, 4.95it/s]<br>2022/07/06 20:47:26  Training: 57%|       | 1101/1947 [03:43&lt;02:50, 4.96it/s]<br>2022/07/06 20:47:26  Training: 57%|       | 1102/1947 [03:44&lt;02:50, 4.97it/s]<br>2022/07/06 20:47:26  Training: 57%|       | 1103/1947 [03:44&lt;02:50, 4.94it/s]<br>2022/07/06 20:47:26  Training: 57%|       | 1104/1947 [03:44&lt;02:49, 4.97it/s]<br>2022/07/06 20:47:27  Training: 57%|       | 1105/1947 [03:44&lt;02:48, 4.99it/s]<br>2022/07/06 20:47:27  Training: 57%|       | 1106/1947 [03:44&lt;02:48, 4.98it/s]<br>2022/07/06 20:47:27  Training: 57%|       | 1107/1947 [03:45&lt;02:48, 5.00it/s]<br>2022/07/06 20:47:27  Training: 57%|       | 1108/1947 [03:45&lt;03:05, 4.52it/s]<br>2022/07/06 20:47:27  Training: 57%|       | 1109/1947 [03:45&lt;03:11, 4.39it/s]<br>2022/07/06 20:47:28  Training: 57%|       | 1110/1947 [03:45&lt;03:07, 4.46it/s]<br>2022/07/06 20:47:28  Training: 57%|       | 1111/1947 [03:45&lt;03:00, 4.62it/s]<br>2022/07/06 20:47:28  Training: 57%|       | 1112/1947 [03:46&lt;02:56, 4.72it/s]<br>2022/07/06 20:47:28  Training: 57%|       | 1113/1947 [03:46&lt;02:53, 4.82it/s]<br>2022/07/06 20:47:28  Training: 57%|       | 1114/1947 [03:46&lt;02:50, 4.88it/s]<br>2022/07/06 20:47:29<br>2022/07/06 20:47:29  Training: 57%|       | 1114/1947 [03:46&lt;02:49, 4.91it/s]<br>2022/07/06 20:47:29</div>
<div style="position:absolute;left:443px;top:539px;width:38px;height:9px;background:linear-gradient(90deg,#333 0,#333 6px,#4a3434 6px,#4a3434 7px,#333 7px,#333 12px,#2f5656 12px,#2f5656 13px,#333 13px,#333 19px,#56562f 19px,#56562f 20px,#333 20px,#333 25px,#553333 25px,#553333 26px,#333 26px,#333 32px,#3a3a66 32px,#3a3a66 33px,#333 33px)"></div>
<div style="position:absolute;left:443px;top:555px;width:38px;height:9px;background:linear-gradient(90deg,#333 0,#333 6px,#4a3434 6px,#4a3434 7px,#333 7px,#333 12px,#2f5656 12px,#2f5656 13px,#333 13px,#333 19px,#56562f 19px,#56562f 20px,#333 20px,#333 25px,#553333 25px,#553333 26px,#333 26px,#333 32px,#3a3a66 32px,#3a3a66 33px,#333 33px)"></div>
<div style="position:absolute;left:443px;top:571px;width:38px;height:9px;background:linear-gradient(90deg,#333 0,#333 6px,#4a3434 6px,#4a3434 7px,#333 7px,#333 12px,#2f5656 12px,#2f5656 13px,#333 13px,#333 19px,#56562f 19px,#56562f 20px,#333 20px,#333 25px,#553333 25px,#553333 26px,#333 26px,#333 32px,#3a3a66 32px,#3a3a66 33px,#333 33px)"></div>
<div style="position:absolute;left:443px;top:587px;width:38px;height:9px;background:linear-gradient(90deg,#333 0,#333 6px,#4a3434 6px,#4a3434 7px,#333 7px,#333 12px,#2f5656 12px,#2f5656 13px,#333 13px,#333 19px,#56562f 19px,#56562f 20px,#333 20px,#333 25px,#553333 25px,#553333 26px,#333 26px,#333 32px,#3a3a66 32px,#3a3a66 33px,#333 33px)"></div>
<div style="position:absolute;left:443px;top:603px;width:38px;height:9px;background:linear-gradient(90deg,#333 0,#333 6px,#4a3434 6px,#4a3434 7px,#333 7px,#333 12px,#2f5656 12px,#2f5656 13px,#333 13px,#333 19px,#56562f 19px,#56562f 20px,#333 20px,#333 25px,#553333 25px,#553333 26px,#333 26px,#333 32px,#3a3a66 32px,#3a3a66 33px,#333 33px)"></div>
<div style="position:absolute;left:443px;top:619px;width:38px;height:9px;background:linear-gradient(90deg,#333 0,#333 6px,#4a3434 6px,#4a3434 7px,#333 7px,#333 12px,#2f5656 12px,#2f5656 13px,#333 13px,#333 19px,#56562f 19px,#56562f 20px,#333 20px,#333 25px,#553333 25px,#553333 26px,#333 26px,#333 32px,#3a3a66 32px,#3a3a66 33px,#333 33px)"></div>
<div style="position:absolute;left:443px;top:635px;width:38px;height:9px;background:linear-gradient(90deg,#333 0,#333 6px,#4a3434 6px,#4a3434 7px,#333 7px,#333 12px,#2f5656 12px,#2f5656 13px,#333 13px,#333 19px,#56562f 19px,#56562f 20px,#333 20px,#333 25px,#553333 25px,#553333 26px,#333 26px,#333 32px,#3a3a66 32px,#3a3a66 33px,#333 33px)"></div>
<div style="position:absolute;left:443px;top:651px;width:38px;height:9px;background:linear-gradient(90deg,#333 0,#333 6px,#4a3434 6px,#4a3434 7px,#333 7px,#333 12px,#2f5656 12px,#2f5656 13px,#333 13px,#333 19px,#56562f 19px,#56562f 20px,#333 20px,#333 25px,#553333 25px,#553333 26px,#333 26px,#333 32px,#3a3a66 32px,#3a3a66 33px,#333 33px)"></div>
<div style="position:absolute;left:443px;top:667px;width:38px;height:9px;background:linear-gradient(90deg,#333 0,#333 6px,#4a3434 6px,#4a3434 7px,#333 7px,#333 12px,#2f5656 12px,#2f5656 13px,#333 13px,#333 19px,#56562f 19px,#56562f 20px,#333 20px,#333 25px,#553333 25px,#553333 26px,#333 26px,#333 32px,#3a3a66 32px,#3a3a66 33px,#333 33px)"></div>
<div style="position:absolute;left:443px;top:683px;width:38px;height:9px;background:linear-gradient(90deg,#333 0,#333 6px,#4a3434 6px,#4a3434 7px,#333 7px,#333 12px,#2f5656 12px,#2f5656 13px,#333 13px,#333 19px,#56562f 19px,#56562f 20px,#333 20px,#333 25px,#553333 25px,#553333 26px,#333 26px,#333 32px,#3a3a66 32px,#3a3a66 33px,#333 33px)"></div>
<div style="position:absolute;left:443px;top:699px;width:38px;height:9px;background:linear-gradient(90deg,#333 0,#333 6px,#4a3434 6px,#4a3434 7px,#333 7px,#333 12px,#2f5656 12px,#2f5656 13px,#333 13px,#333 19px,#56562f 19px,#56562f 20px,#333 20px,#333 25px,#553333 25px,#553333 26px,#333 26px,#333 32px,#3a3a66 32px,#3a3a66 33px,#333 33px)"></div>
<div style="position:absolute;left:443px;top:715px;width:38px;height:9px;background:linear-gradient(90deg,#333 0,#333 6px,#4a3434 6px,#4a3434 7px,#333 7px,#333 12px,#2f5656 12px,#2f5656 13px,#333 13px,#333 19px,#56562f 19px,#56562f 20px,#333 20px,#333 25px,#553333 25px,#553333 26px,#333 26px,#333 32px,#3a3a66 32px,#3a3a66 33px,#333 33px)"></div>
<div style="position:absolute;left:443px;top:731px;width:38px;height:9px;background:linear-gradient(90deg,#333 0,#333 6px,#4a3434 6px,#4a3434 7px,#333 7px,#333 12px,#2f5656 12px,#2f5656 13px,#333 13px,#333 19px,#56562f 19px,#56562f 20px,#333 20px,#333 25px,#553333 25px,#553333 26px,#333 26px,#333 32px,#3a3a66 32px,#3a3a66 33px,#333 33px)"></div>
<div style="position:absolute;left:443px;top:747px;width:38px;height:9px;background:linear-gradient(90deg,#333 0,#333 6px,#4a3434 6px,#4a3434 7px,#333 7px,#333 12px,#2f5656 12px,#2f5656 13px,#333 13px,#333 19px,#56562f 19px,#56562f 20px,#333 20px,#333 25px,#553333 25px,#553333 26px,#333 26px,#333 32px,#3a3a66 32px,#3a3a66 33px,#333 33px)"></div>
<div style="position:absolute;left:443px;top:763px;width:38px;height:9px;background:linear-gradient(90deg,#333 0,#333 6px,#4a3434 6px,#4a3434 7px,#333 7px,#333 12px,#2f5656 12px,#2f5656 13px,#333 13px,#333 19px,#56562f 19px,#56562f 20px,#333 20px,#333 25px,#553333 25px,#553333 26px,#333 26px,#333 32px,#3a3a66 32px,#3a3a66 33px,#333 33px)"></div>
<div style="position:absolute;left:443px;top:779px;width:38px;height:9px;background:linear-gradient(90deg,#333 0,#333 6px,#4a3434 6px,#4a3434 7px,#333 7px,#333 12px,#2f5656 12px,#2f5656 13px,#333 13px,#333 19px,#56562f 19px,#56562f 20px,#333 20px,#333 25px,#553333 25px,#553333 26px,#333 26px,#333 32px,#3a3a66 32px,#3a3a66 33px,#333 33px)"></div>
<div style="position:absolute;left:443px;top:795px;width:38px;height:9px;background:linear-gradient(90deg,#333 0,#333 6px,#4a3434 6px,#4a3434 7px,#333 7px,#333 12px,#2f5656 12px,#2f5656 13px,#333 13px,#333 19px,#56562f 19px,#56562f 20px,#333 20px,#333 25px,#553333 25px,#553333 26px,#333 26px,#333 32px,#3a3a66 32px,#3a3a66 33px,#333 33px)"></div>
<div style="position:absolute;left:443px;top:827px;width:38px;height:9px;background:linear-gradient(90deg,#333 0,#333 6px,#4a3434 6px,#4a3434 7px,#333 7px,#333 12px,#2f5656 12px,#2f5656 13px,#333 13px,#333 19px,#56562f 19px,#56562f 20px,#333 20px,#333 25px,#553333 25px,#553333 26px,#333 26px,#333 32px,#3a3a66 32px,#3a3a66 33px,#333 33px)"></div>
<div style="position:absolute;left:972px;top:511px;width:765px;height:360px;border:1px solid #cfcfcf;border-radius:3px;box-sizing:border-box;background:#fff"></div>
<div style="position:absolute;left:973px;top:512px;width:763px;height:26px;background:#f7f7f7"></div>
<div class="t" style="left:980px;top:519px;font-size:11px;color:#2b2b2b;font-weight:700;transform:scaleX(0.9459);">monitoring/stdout</div>
<svg style="position:absolute;left:1719px;top:519px;" width="12" height="11" viewBox="0 0 12 11"><path d="M5.5 0.5 L5.5 7 M2 4 L5.5 7.5 L9 4" fill="none" stroke="#0b5cb5" stroke-width="1.6"/><rect x="0" y="9" width="11.5" height="1.6" fill="#0b5cb5"/></svg>
<div style="position:absolute;left:1732px;top:538px;width:4px;height:332px;background:#cfdde5"></div>
<div style="position:absolute;left:1732px;top:850px;width:4px;height:20px;background:#1589aa"></div>
<div style="position:absolute;left:986px;top:537px;font-family:'Liberation Mono',monospace;font-size:12px;letter-spacing:-0.5px;line-height:16px;color:#2f2f2f;white-space:pre">2022/07/06 20:16:29  Epoch:<br>2022/07/06 20:16:29<br>2022/07/06 20:16:29  82<br>2022/07/06 20:16:29<br>2022/07/06 20:23:22  Epoch:<br>2022/07/06 20:23:22<br>2022/07/06 20:23:22  83<br>2022/07/06 20:23:22<br>2022/07/06 20:30:10  Epoch:<br>2022/07/06 20:30:10<br>2022/07/06 20:30:10  84<br>2022/07/06 20:30:10<br>2022/07/06 20:36:56  Epoch:<br>2022/07/06 20:36:56<br>2022/07/06 20:36:56  85<br>2022/07/06 20:36:56<br>2022/07/06 20:43:42  Epoch:<br>2022/07/06 20:43:42<br>2022/07/06 20:43:42  86<br>2022/07/06 20:43:42</div>
<div style="position:absolute;left:1600px;top:845px;width:154px;height:37px;background:radial-gradient(ellipse 100% 100% at 100% 100%,rgba(0,0,0,0.035),rgba(0,0,0,0) 80%)"></div>
</body></html>
